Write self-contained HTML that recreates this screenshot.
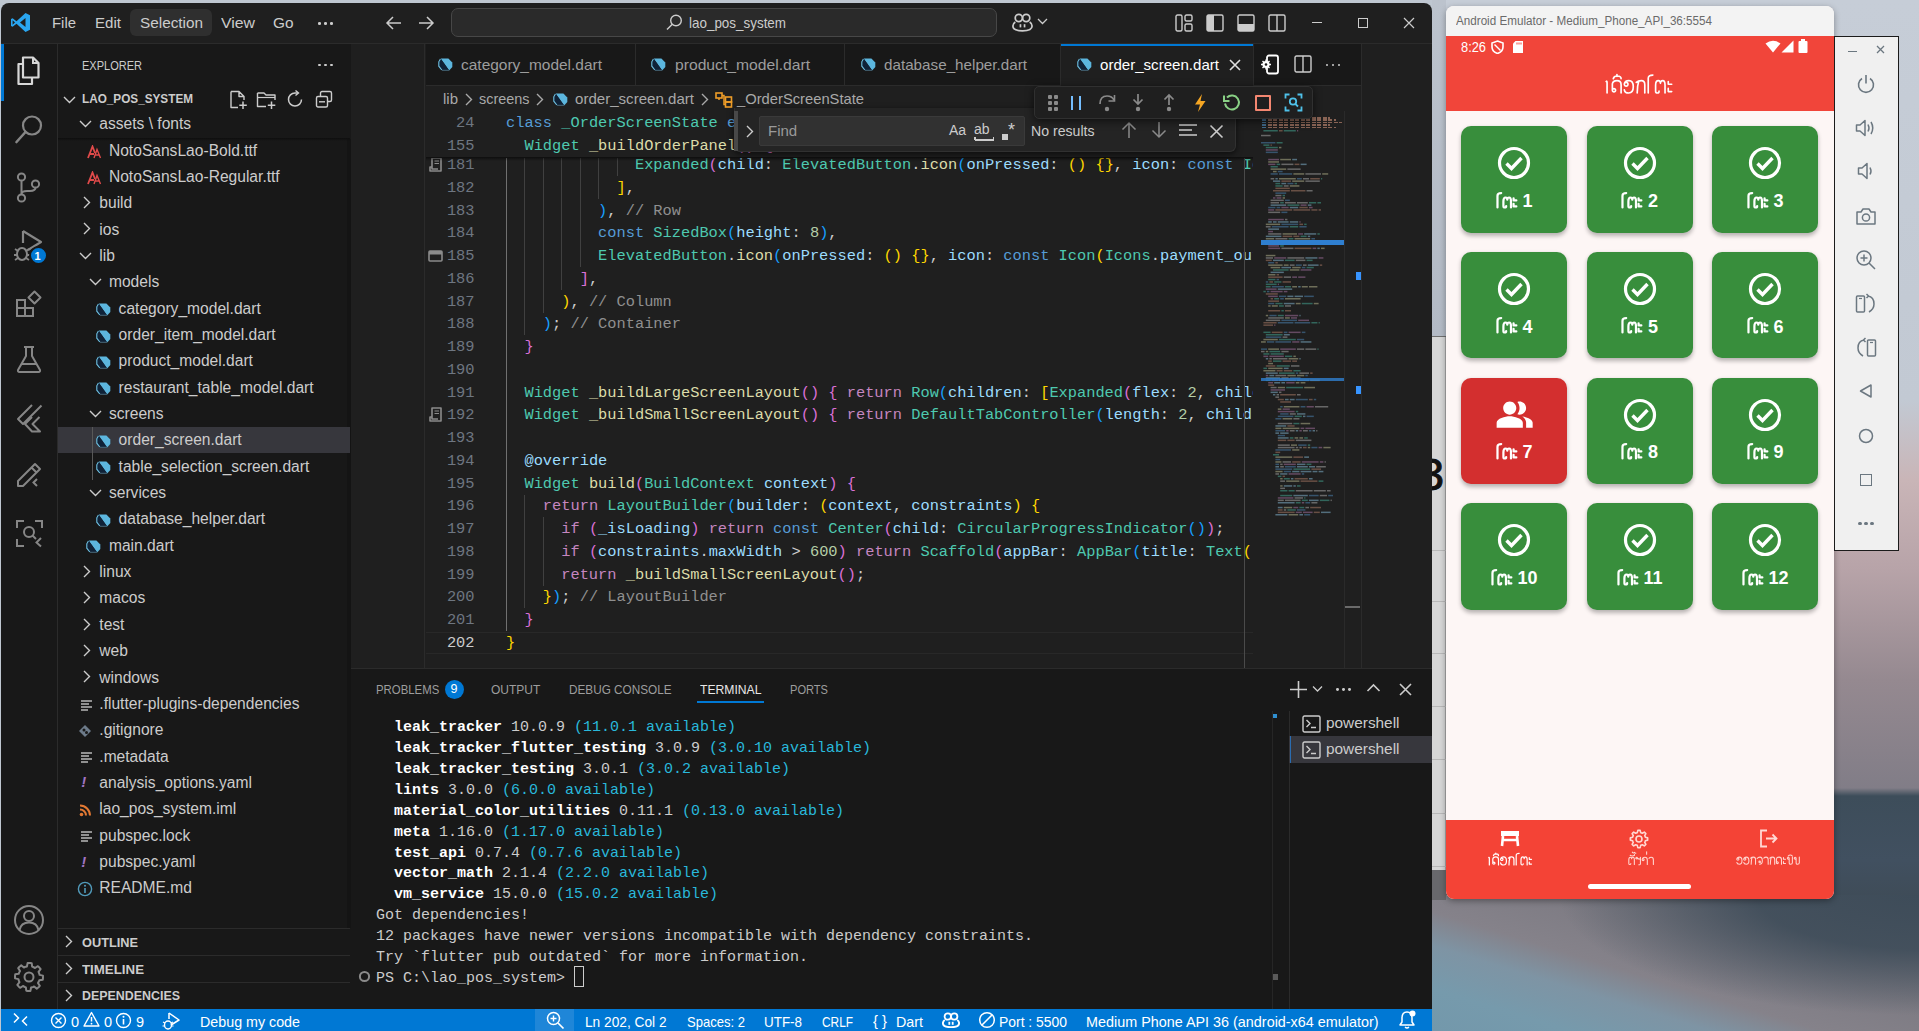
<!DOCTYPE html><html><head><meta charset="utf-8"><style>
html,body{margin:0;padding:0}
body{width:1919px;height:1031px;overflow:hidden;position:relative;background:#bfc7d1;font-family:"Liberation Sans",sans-serif}
.a{position:absolute;box-sizing:border-box}
.t{white-space:pre}
</style></head><body>
<div class="a" style="left:1432px;top:0px;width:487px;height:1031px;background:linear-gradient(180deg,#c6cdd7 0px,#c2c9d3 400px,#c9b5b7 480px,#b7a3a8 570px,#958990 680px,#817d87 788px,#3d4d5a 796px,#415060 860px,#3f4c58 897px,#767780 1031px)"></div>
<div class="a" style="left:1432px;top:895px;width:487px;height:136px;background:radial-gradient(ellipse 360px 120px at 100% 0%,rgba(62,76,89,1) 0%,rgba(62,76,89,.9) 45%,rgba(62,76,89,0) 100%),linear-gradient(197deg,#6f7079 0%,#7a7880 30%,#85828a 58%,#7e94a4 70%,#769aac 85%,#7398ab 100%)"></div>
<div class="a" style="left:1432px;top:0px;width:14px;height:337px;background:linear-gradient(180deg,#bcc3cd,#b3bac5)"></div>
<div class="a" style="left:1432px;top:336px;width:14px;height:1.5px;background:#6e6e6e"></div>
<div class="a" style="left:1432px;top:337px;width:14px;height:533px;background:#d6d6d6;border-right:1px solid #a8a8a8"></div>
<div class="a" style="left:1432px;top:870px;width:14px;height:30px;background:#68686c"></div>
<div class="a" style="left:1432px;top:550px;width:14px;height:1px;background:#b8b8b8"></div>
<div class="a" style="left:1432px;top:600.5px;width:14px;height:1px;background:#b8b8b8"></div>
<div class="a" style="left:1432px;top:653px;width:14px;height:1px;background:#b8b8b8"></div>
<div class="a" style="left:1432px;top:706px;width:14px;height:1px;background:#b8b8b8"></div>
<div class="a" style="left:1432px;top:759px;width:14px;height:1px;background:#b8b8b8"></div>
<div class="a" style="left:1432px;top:812.5px;width:14px;height:1px;background:#b8b8b8"></div>
<div class="a" style="left:1432px;top:866px;width:14px;height:1px;background:#b8b8b8"></div>
<div class="a t" style="left:1419px;top:450.27px;font-size:45px;line-height:50.27px;color:#111111;font-family:'Liberation Sans',sans-serif;font-weight:400;-webkit-text-stroke:1px #111;">3</div>
<div class="a" style="left:1px;top:3px;width:1431px;height:1028px;background:#1f1f1f;border-radius:8px 8px 0 0;overflow:hidden"></div>
<div class="a" style="left:1px;top:43px;width:1431px;height:1px;background:#2b2b2b"></div>
<svg class="a" style="left:10px;top:12px;" width="21" height="21" viewBox="0 0 21 21" fill="none"><path d="M15.5 1 L20 3.2 V17.8 L15.5 20 L6.5 11.8 L2.6 14.8 L1 14 V7 L2.6 6.2 L6.5 9.2 Z M15.5 6 L10 10.5 L15.5 15 Z M2.6 8.2 V12.8 L5 10.5 Z" fill="#2aa6f0" fill-rule="evenodd"/></svg>
<div class="a" style="left:130px;top:9px;width:82px;height:27px;background:#2f2f2f;border-radius:6px"></div>
<div class="a t" style="left:52px;top:15.22px;font-size:15px;line-height:16.75px;color:#cccccc;font-family:'Liberation Sans',sans-serif;font-weight:400;transform:scaleX(0.9930);transform-origin:0 0;">File</div>
<div class="a t" style="left:94.5px;top:15.22px;font-size:15px;line-height:16.75px;color:#cccccc;font-family:'Liberation Sans',sans-serif;font-weight:400;transform:scaleX(1.0059);transform-origin:0 0;">Edit</div>
<div class="a t" style="left:139.5px;top:15.22px;font-size:15px;line-height:16.75px;color:#cccccc;font-family:'Liberation Sans',sans-serif;font-weight:400;transform:scaleX(1.0210);transform-origin:0 0;">Selection</div>
<div class="a t" style="left:220.5px;top:15.22px;font-size:15px;line-height:16.75px;color:#cccccc;font-family:'Liberation Sans',sans-serif;font-weight:400;transform:scaleX(1.0546);transform-origin:0 0;">View</div>
<div class="a t" style="left:273px;top:15.22px;font-size:15px;line-height:16.75px;color:#cccccc;font-family:'Liberation Sans',sans-serif;font-weight:400;transform:scaleX(1.0246);transform-origin:0 0;">Go</div>
<div class="a" style="left:318.2px;top:22px;width:2.6px;height:2.6px;background:#cccccc;border-radius:50%"></div>
<div class="a" style="left:324.2px;top:22px;width:2.6px;height:2.6px;background:#cccccc;border-radius:50%"></div>
<div class="a" style="left:330.2px;top:22px;width:2.6px;height:2.6px;background:#cccccc;border-radius:50%"></div>
<svg class="a" style="left:384px;top:14px;" width="20" height="18" viewBox="0 0 20 18" fill="none"><path d="M17 9 H3 M9 3 L3 9 L9 15" stroke="#cccccc" stroke-width="1.5"/></svg>
<svg class="a" style="left:416px;top:14px;" width="20" height="18" viewBox="0 0 20 18" fill="none"><path d="M3 9 H17 M11 3 L17 9 L11 15" stroke="#cccccc" stroke-width="1.5"/></svg>
<div class="a" style="left:451px;top:8px;width:546px;height:29px;background:#2a2a2a;border:1px solid #474747;border-radius:7px"></div>
<svg class="a" style="left:665px;top:13px;" width="19" height="19" viewBox="0 0 19 19" fill="none"><circle cx="11" cy="7.5" r="5.3" stroke="#cccccc" stroke-width="1.4"/><path d="M7.3 11.2 L2 16.5" stroke="#cccccc" stroke-width="1.5"/></svg>
<div class="a t" style="left:688.5px;top:14.92px;font-size:15px;line-height:16.75px;color:#cccccc;font-family:'Liberation Sans',sans-serif;font-weight:400;transform:scaleX(0.8950);transform-origin:0 0;">lao_pos_system</div>
<svg class="a" style="left:1012px;top:13px;" width="21" height="19" viewBox="0 0 21 19" fill="none"><circle cx="6.8" cy="5" r="3.6" stroke="#cccccc" stroke-width="1.7"/><circle cx="14.2" cy="5" r="3.6" stroke="#cccccc" stroke-width="1.7"/><path d="M3.3 9 Q0.9 10.5 0.9 13 Q0.9 17.8 10.5 17.8 Q20.1 17.8 20.1 13 Q20.1 10.5 17.7 9" stroke="#cccccc" stroke-width="1.7"/><rect x="7.6" y="11.2" width="1.7" height="3.2" fill="#cccccc"/><rect x="11.7" y="11.2" width="1.7" height="3.2" fill="#cccccc"/></svg>
<svg class="a" style="left:1037px;top:17px;" width="11" height="8" viewBox="0 0 11 8" fill="none"><path d="M1 2 L5.5 6.5 L10 2" stroke="#cccccc" stroke-width="1.3"/></svg>
<svg class="a" style="left:1175px;top:14px;" width="18" height="18" viewBox="0 0 18 18" fill="none"><rect x="1" y="1" width="6" height="16" rx="1.5" stroke="#cccccc" stroke-width="1.4"/><rect x="10" y="1" width="7" height="6" rx="1.5" stroke="#cccccc" stroke-width="1.4"/><rect x="10" y="10" width="7" height="7" rx="1.5" stroke="#cccccc" stroke-width="1.4"/></svg>
<svg class="a" style="left:1206px;top:14px;" width="18" height="18" viewBox="0 0 18 18" fill="none"><rect x="1" y="1" width="16" height="16" rx="1.5" stroke="#cccccc" stroke-width="1.4"/><rect x="1" y="1" width="7" height="16" fill="#cccccc"/></svg>
<svg class="a" style="left:1237px;top:14px;" width="18" height="18" viewBox="0 0 18 18" fill="none"><rect x="1" y="1" width="16" height="16" rx="1.5" stroke="#cccccc" stroke-width="1.4"/><rect x="1" y="10" width="16" height="7" fill="#cccccc"/></svg>
<svg class="a" style="left:1268px;top:14px;" width="18" height="18" viewBox="0 0 18 18" fill="none"><rect x="1" y="1" width="16" height="16" rx="1.5" stroke="#cccccc" stroke-width="1.4"/><path d="M9 1 V17" stroke="#cccccc" stroke-width="1.4"/></svg>
<div class="a" style="left:1312px;top:22px;width:10px;height:1.2px;background:#cccccc"></div>
<div class="a" style="left:1358px;top:18px;width:10px;height:10px;border:1.2px solid #cccccc"></div>
<svg class="a" style="left:1403px;top:17px;" width="12" height="12" viewBox="0 0 12 12" fill="none"><path d="M1 1 L11 11 M11 1 L1 11" stroke="#cccccc" stroke-width="1.2"/></svg>
<div class="a" style="left:1px;top:44px;width:57px;height:965px;background:#181818"></div>
<div class="a" style="left:57px;top:44px;width:1px;height:965px;background:#2b2b2b"></div>
<div class="a" style="left:58px;top:44px;width:293px;height:965px;background:#181818"></div>
<div class="a" style="left:347px;top:139px;width:4px;height:789px;background:#141414"></div>
<div class="a" style="left:351px;top:44px;width:1px;height:965px;background:#2b2b2b"></div>
<div class="a" style="left:351px;top:44px;width:1081px;height:624px;background:#1f1f1f"></div>
<div class="a" style="left:424px;top:44px;width:1px;height:624px;background:#2b2b2b"></div>
<div class="a" style="left:1361px;top:44px;width:1px;height:624px;background:#2b2b2b"></div>
<div class="a" style="left:426px;top:44px;width:935px;height:42px;background:#181818"></div>
<div class="a" style="left:426px;top:85px;width:935px;height:1px;background:#2b2b2b"></div>
<div class="a" style="left:351px;top:668px;width:1081px;height:341px;background:#181818;border-top:1px solid #2b2b2b"></div>
<div class="a" style="left:1px;top:1009px;width:1431px;height:22px;background:#0078d4"></div>
<div class="a" style="left:1px;top:44px;width:2.5px;height:57px;background:#0078d4"></div>
<svg class="a" style="left:14px;top:56px;" width="29" height="30" viewBox="0 0 29 30" fill="none"><path d="M9 1.5 H19 L24.5 7 V21.5 H9 Z" stroke="#d7d7d7" stroke-width="2.2" stroke-linejoin="round"/><path d="M19 1.5 V7 H24.5" stroke="#d7d7d7" stroke-width="2"/><path d="M9 8 H4.5 V28 H18 V22" stroke="#d7d7d7" stroke-width="2.2" stroke-linejoin="round"/></svg>
<svg class="a" style="left:14px;top:114px;" width="30" height="31" viewBox="0 0 30 31" fill="none"><circle cx="18" cy="11.5" r="9" stroke="#868686" stroke-width="2.2"/><path d="M11.5 18 L2.5 28" stroke="#868686" stroke-width="2.6" stroke-linecap="round"/></svg>
<svg class="a" style="left:16px;top:172px;" width="25" height="31" viewBox="0 0 25 31" fill="none"><circle cx="5.5" cy="5" r="3.6" stroke="#868686" stroke-width="2"/><circle cx="5.5" cy="26" r="3.6" stroke="#868686" stroke-width="2"/><circle cx="19.5" cy="12" r="3.6" stroke="#868686" stroke-width="2"/><path d="M5.5 8.6 V22.4 M19.5 15.6 Q19.5 19 14 19 H11 Q5.5 19 5.5 22.4" stroke="#868686" stroke-width="2"/></svg>
<svg class="a" style="left:12px;top:228px;" width="32" height="34" viewBox="0 0 32 34" fill="none"><path d="M11 3 L29 14 L16 22" stroke="#868686" stroke-width="2.2" stroke-linejoin="round"/><path d="M11 3 V15" stroke="#868686" stroke-width="2.2"/><ellipse cx="10" cy="26" rx="5" ry="6" stroke="#868686" stroke-width="2"/><path d="M3 21 L6 23 M17 21 L14 23 M2 27 H5 M15 27 H18 M3 32 L6 30 M17 32 L14 30" stroke="#868686" stroke-width="1.8"/></svg>
<div class="a" style="left:28.5px;top:245.5px;width:19px;height:19px;background:#0078d4;border-radius:50%;border:2px solid #181818"></div>
<div class="a t" style="left:34.5px;top:250.04px;font-size:11px;line-height:12.29px;color:#ffffff;font-family:'Liberation Sans',sans-serif;font-weight:700;">1</div>
<svg class="a" style="left:15px;top:289px;" width="28" height="28" viewBox="0 0 28 28" fill="none"><rect x="2" y="11" width="8" height="8" stroke="#868686" stroke-width="2"/><rect x="2" y="19" width="8" height="8" stroke="#868686" stroke-width="2"/><rect x="10" y="19" width="8" height="8" stroke="#868686" stroke-width="2"/><path d="M19.5 2.5 L25.5 8.5 L19.5 14.5 L13.5 8.5 Z" stroke="#868686" stroke-width="2" stroke-linejoin="round"/></svg>
<svg class="a" style="left:15px;top:345px;" width="28" height="29" viewBox="0 0 28 29" fill="none"><path d="M9 2 H19 M11 2 V11 L3 25 Q2.5 27 4.5 27 H23.5 Q25.5 27 25 25 L17 11 V2" stroke="#868686" stroke-width="2" stroke-linejoin="round"/><path d="M7 19 H21" stroke="#868686" stroke-width="2"/></svg>
<svg class="a" style="left:15px;top:403px;" width="28" height="31" viewBox="0 0 28 31" fill="none"><path d="M17 2 L3 16 L8 21 L26.5 2.5" stroke="#868686" stroke-width="2" stroke-linejoin="round"/><path d="M17 14 L10 21 L17 28.5 L25 28.5 L17.5 21 L24.5 14" stroke="#868686" stroke-width="2" stroke-linejoin="round"/></svg>
<svg class="a" style="left:15px;top:462px;" width="28" height="26" viewBox="0 0 28 26" fill="none"><path d="M20 2 L25 7 L8 24 H3 V19 Z M16.5 5.5 L21.5 10.5" stroke="#868686" stroke-width="2" stroke-linejoin="round"/><path d="M22 17 L18.5 20.5 L22 24" stroke="#868686" stroke-width="2"/></svg>
<svg class="a" style="left:15px;top:519px;" width="29" height="29" viewBox="0 0 29 29" fill="none"><path d="M2 9 V2 H9 M20 2 H27 V9 M2 20 V27 H9" stroke="#868686" stroke-width="2"/><circle cx="14" cy="13" r="5" stroke="#868686" stroke-width="2"/><path d="M17.5 16.5 L21 20" stroke="#868686" stroke-width="2"/><path d="M26 19 L21.5 23.5 L26 27.5" stroke="#868686" stroke-width="2"/></svg>
<svg class="a" style="left:13px;top:904px;" width="32" height="32" viewBox="0 0 32 32" fill="none"><circle cx="16" cy="16" r="14" stroke="#868686" stroke-width="2"/><circle cx="16" cy="12" r="5" stroke="#868686" stroke-width="2"/><path d="M6.5 26 Q8 18.5 16 18.5 Q24 18.5 25.5 26" stroke="#868686" stroke-width="2"/></svg>
<svg class="a" style="left:13px;top:961px;" width="32" height="32" viewBox="0 0 32 32" fill="none"><polygon points="30.00,16.00 29.93,17.37 29.73,18.73 26.33,19.14 25.98,20.13 25.52,21.09 24.98,22.00 26.82,24.88 25.90,25.90 24.88,26.82 23.78,27.64 21.09,25.52 20.13,25.98 19.14,26.33 18.11,26.59 17.37,29.93 16.00,30.00 14.63,29.93 13.27,29.73 12.86,26.33 11.87,25.98 10.91,25.52 10.00,24.98 7.12,26.82 6.10,25.90 5.18,24.88 4.36,23.78 6.48,21.09 6.02,20.13 5.67,19.14 5.41,18.11 2.07,17.37 2.00,16.00 2.07,14.63 2.27,13.27 5.67,12.86 6.02,11.87 6.48,10.91 7.02,10.00 5.18,7.12 6.10,6.10 7.12,5.18 8.22,4.36 10.91,6.48 11.87,6.02 12.86,5.67 13.89,5.41 14.63,2.07 16.00,2.00 17.37,2.07 18.73,2.27 19.14,5.67 20.13,6.02 21.09,6.48 22.00,7.02 24.88,5.18 25.90,6.10 26.82,7.12 27.64,8.22 25.52,10.91 25.98,11.87 26.33,12.86 26.59,13.89 29.93,14.63" stroke="#868686" stroke-width="2" stroke-linejoin="round"/><circle cx="16" cy="16" r="4.5" stroke="#868686" stroke-width="2"/></svg>
<div class="a t" style="left:82px;top:58.38px;font-size:13.5px;line-height:15.08px;color:#cccccc;font-family:'Liberation Sans',sans-serif;font-weight:400;transform:scaleX(0.8160);transform-origin:0 0;">EXPLORER</div>
<div class="a" style="left:318.1px;top:63.5px;width:2.8px;height:2.8px;background:#cccccc;border-radius:50%"></div>
<div class="a" style="left:324.1px;top:63.5px;width:2.8px;height:2.8px;background:#cccccc;border-radius:50%"></div>
<div class="a" style="left:330.1px;top:63.5px;width:2.8px;height:2.8px;background:#cccccc;border-radius:50%"></div>
<svg class="a" style="left:63px;top:95px;" width="13" height="9" viewBox="0 0 13 9" fill="none"><path d="M1 2 L6.5 7.5 L12 2" stroke="#cccccc" stroke-width="1.4"/></svg>
<div class="a t" style="left:82px;top:92.03px;font-size:13px;line-height:14.52px;color:#cccccc;font-family:'Liberation Sans',sans-serif;font-weight:700;transform:scaleX(0.9039);transform-origin:0 0;">LAO_POS_SYSTEM</div>
<svg class="a" style="left:229px;top:90px;" width="20" height="20" viewBox="0 0 20 20" fill="none"><path d="M2 1.5 H10 L15 6.5 V10 M10 1.5 V6.5 H15 M2 1.5 V17.5 H9" stroke="#cccccc" stroke-width="1.4" stroke-linejoin="round"/><path d="M14 11.5 V19 M10.3 15.2 H17.8" stroke="#cccccc" stroke-width="1.5"/></svg>
<svg class="a" style="left:256px;top:90px;" width="22" height="20" viewBox="0 0 22 20" fill="none"><path d="M1.5 3 V16.5 H10 M1.5 3 H8 L10 5 H19 V10" stroke="#cccccc" stroke-width="1.4" stroke-linejoin="round"/><path d="M1.5 7.5 H19" stroke="#cccccc" stroke-width="1.2"/><path d="M15.5 11.5 V19 M11.8 15.2 H19.3" stroke="#cccccc" stroke-width="1.5"/></svg>
<svg class="a" style="left:286px;top:90px;" width="19" height="19" viewBox="0 0 19 19" fill="none"><path d="M15.5 9.5 A6.5 6.5 0 1 1 9 3 H12" stroke="#cccccc" stroke-width="1.5"/><path d="M9.5 0.5 L12.5 3 L9.5 5.5" stroke="#cccccc" stroke-width="1.4"/></svg>
<svg class="a" style="left:315px;top:90px;" width="18" height="19" viewBox="0 0 18 19" fill="none"><rect x="5.5" y="1.5" width="11" height="10" rx="1.5" stroke="#cccccc" stroke-width="1.4"/><rect x="1.5" y="6.5" width="11" height="10.5" rx="1.5" stroke="#cccccc" stroke-width="1.4" fill="#181818"/><path d="M4 11.8 H10" stroke="#cccccc" stroke-width="1.4"/></svg>
<div class="a" style="left:58px;top:427px;width:292px;height:26px;background:#37373d"></div>
<div class="a" style="left:92px;top:427px;width:1px;height:53px;background:#585858"></div>
<svg class="a" style="left:79.1px;top:119.0px;" width="13" height="9" viewBox="0 0 13 9" fill="none"><path d="M1 2 L6.5 7.5 L12 2" stroke="#cccccc" stroke-width="1.4"/></svg>
<div class="a t" style="left:99.3px;top:115.18px;font-size:15.6px;line-height:17.43px;color:#cccccc;font-family:'Liberation Sans',sans-serif;font-weight:400;">assets \ fonts</div>
<svg class="a" style="left:86.95px;top:144.65px;" width="15" height="14" viewBox="0 0 15 14" fill="none"><path d="M1 13 L5.5 1.5 L8 8 M3 9 H7" stroke="#e04a4a" stroke-width="1.8"/><path d="M7 13 L10 4.5 L13.5 13 M8.5 10 H12" stroke="#e04a4a" stroke-width="1.4"/></svg>
<div class="a t" style="left:108.95px;top:141.53px;font-size:15.6px;line-height:17.43px;color:#cccccc;font-family:'Liberation Sans',sans-serif;font-weight:400;">NotoSansLao-Bold.ttf</div>
<svg class="a" style="left:86.95px;top:171.0px;" width="15" height="14" viewBox="0 0 15 14" fill="none"><path d="M1 13 L5.5 1.5 L8 8 M3 9 H7" stroke="#e04a4a" stroke-width="1.8"/><path d="M7 13 L10 4.5 L13.5 13 M8.5 10 H12" stroke="#e04a4a" stroke-width="1.4"/></svg>
<div class="a t" style="left:108.95px;top:167.88px;font-size:15.6px;line-height:17.43px;color:#cccccc;font-family:'Liberation Sans',sans-serif;font-weight:400;">NotoSansLao-Regular.ttf</div>
<svg class="a" style="left:81.6px;top:196.05px;" width="9" height="13" viewBox="0 0 9 13" fill="none"><path d="M2 1 L7.5 6.5 L2 12" stroke="#cccccc" stroke-width="1.4"/></svg>
<div class="a t" style="left:99.3px;top:194.23px;font-size:15.6px;line-height:17.43px;color:#cccccc;font-family:'Liberation Sans',sans-serif;font-weight:400;">build</div>
<svg class="a" style="left:81.6px;top:222.39999999999998px;" width="9" height="13" viewBox="0 0 9 13" fill="none"><path d="M2 1 L7.5 6.5 L2 12" stroke="#cccccc" stroke-width="1.4"/></svg>
<div class="a t" style="left:99.3px;top:220.58px;font-size:15.6px;line-height:17.43px;color:#cccccc;font-family:'Liberation Sans',sans-serif;font-weight:400;">ios</div>
<svg class="a" style="left:79.1px;top:250.75px;" width="13" height="9" viewBox="0 0 13 9" fill="none"><path d="M1 2 L6.5 7.5 L12 2" stroke="#cccccc" stroke-width="1.4"/></svg>
<div class="a t" style="left:99.3px;top:246.93px;font-size:15.6px;line-height:17.43px;color:#cccccc;font-family:'Liberation Sans',sans-serif;font-weight:400;">lib</div>
<svg class="a" style="left:88.75px;top:277.1px;" width="13" height="9" viewBox="0 0 13 9" fill="none"><path d="M1 2 L6.5 7.5 L12 2" stroke="#cccccc" stroke-width="1.4"/></svg>
<div class="a t" style="left:108.95px;top:273.28px;font-size:15.6px;line-height:17.43px;color:#cccccc;font-family:'Liberation Sans',sans-serif;font-weight:400;">models</div>
<svg class="a" style="left:96.1px;top:303.25px;" width="15" height="13" viewBox="0 0 15 13" fill="none"><path d="M2.6 0.6 L10.4 0.6 L14.3 4.4 L14.3 9 L11.2 12.4 Z" fill="#5cb6de"/><path d="M2.6 0.6 L11.2 12.4 L4 12.4 L0.7 8.4 L0.7 3.6 Z" fill="#0f2238"/><path d="M2.4 1 L0.8 3.8 L0.8 8.2 L3.8 12" stroke="#6fc0e0" stroke-width="1.1" fill="none"/><path d="M4 12.3 L11 12.3" stroke="#4f6f80" stroke-width="0.9"/></svg>
<div class="a t" style="left:118.6px;top:299.63px;font-size:15.6px;line-height:17.43px;color:#cccccc;font-family:'Liberation Sans',sans-serif;font-weight:400;">category_model.dart</div>
<svg class="a" style="left:96.1px;top:329.6px;" width="15" height="13" viewBox="0 0 15 13" fill="none"><path d="M2.6 0.6 L10.4 0.6 L14.3 4.4 L14.3 9 L11.2 12.4 Z" fill="#5cb6de"/><path d="M2.6 0.6 L11.2 12.4 L4 12.4 L0.7 8.4 L0.7 3.6 Z" fill="#0f2238"/><path d="M2.4 1 L0.8 3.8 L0.8 8.2 L3.8 12" stroke="#6fc0e0" stroke-width="1.1" fill="none"/><path d="M4 12.3 L11 12.3" stroke="#4f6f80" stroke-width="0.9"/></svg>
<div class="a t" style="left:118.6px;top:325.98px;font-size:15.6px;line-height:17.43px;color:#cccccc;font-family:'Liberation Sans',sans-serif;font-weight:400;">order_item_model.dart</div>
<svg class="a" style="left:96.1px;top:355.95px;" width="15" height="13" viewBox="0 0 15 13" fill="none"><path d="M2.6 0.6 L10.4 0.6 L14.3 4.4 L14.3 9 L11.2 12.4 Z" fill="#5cb6de"/><path d="M2.6 0.6 L11.2 12.4 L4 12.4 L0.7 8.4 L0.7 3.6 Z" fill="#0f2238"/><path d="M2.4 1 L0.8 3.8 L0.8 8.2 L3.8 12" stroke="#6fc0e0" stroke-width="1.1" fill="none"/><path d="M4 12.3 L11 12.3" stroke="#4f6f80" stroke-width="0.9"/></svg>
<div class="a t" style="left:118.6px;top:352.33px;font-size:15.6px;line-height:17.43px;color:#cccccc;font-family:'Liberation Sans',sans-serif;font-weight:400;">product_model.dart</div>
<svg class="a" style="left:96.1px;top:382.3px;" width="15" height="13" viewBox="0 0 15 13" fill="none"><path d="M2.6 0.6 L10.4 0.6 L14.3 4.4 L14.3 9 L11.2 12.4 Z" fill="#5cb6de"/><path d="M2.6 0.6 L11.2 12.4 L4 12.4 L0.7 8.4 L0.7 3.6 Z" fill="#0f2238"/><path d="M2.4 1 L0.8 3.8 L0.8 8.2 L3.8 12" stroke="#6fc0e0" stroke-width="1.1" fill="none"/><path d="M4 12.3 L11 12.3" stroke="#4f6f80" stroke-width="0.9"/></svg>
<div class="a t" style="left:118.6px;top:378.68px;font-size:15.6px;line-height:17.43px;color:#cccccc;font-family:'Liberation Sans',sans-serif;font-weight:400;">restaurant_table_model.dart</div>
<svg class="a" style="left:88.75px;top:408.85px;" width="13" height="9" viewBox="0 0 13 9" fill="none"><path d="M1 2 L6.5 7.5 L12 2" stroke="#cccccc" stroke-width="1.4"/></svg>
<div class="a t" style="left:108.95px;top:405.03px;font-size:15.6px;line-height:17.43px;color:#cccccc;font-family:'Liberation Sans',sans-serif;font-weight:400;">screens</div>
<svg class="a" style="left:96.1px;top:435.00000000000006px;" width="15" height="13" viewBox="0 0 15 13" fill="none"><path d="M2.6 0.6 L10.4 0.6 L14.3 4.4 L14.3 9 L11.2 12.4 Z" fill="#5cb6de"/><path d="M2.6 0.6 L11.2 12.4 L4 12.4 L0.7 8.4 L0.7 3.6 Z" fill="#0f2238"/><path d="M2.4 1 L0.8 3.8 L0.8 8.2 L3.8 12" stroke="#6fc0e0" stroke-width="1.1" fill="none"/><path d="M4 12.3 L11 12.3" stroke="#4f6f80" stroke-width="0.9"/></svg>
<div class="a t" style="left:118.6px;top:431.38px;font-size:15.6px;line-height:17.43px;color:#cccccc;font-family:'Liberation Sans',sans-serif;font-weight:400;">order_screen.dart</div>
<svg class="a" style="left:96.1px;top:461.35px;" width="15" height="13" viewBox="0 0 15 13" fill="none"><path d="M2.6 0.6 L10.4 0.6 L14.3 4.4 L14.3 9 L11.2 12.4 Z" fill="#5cb6de"/><path d="M2.6 0.6 L11.2 12.4 L4 12.4 L0.7 8.4 L0.7 3.6 Z" fill="#0f2238"/><path d="M2.4 1 L0.8 3.8 L0.8 8.2 L3.8 12" stroke="#6fc0e0" stroke-width="1.1" fill="none"/><path d="M4 12.3 L11 12.3" stroke="#4f6f80" stroke-width="0.9"/></svg>
<div class="a t" style="left:118.6px;top:457.73px;font-size:15.6px;line-height:17.43px;color:#cccccc;font-family:'Liberation Sans',sans-serif;font-weight:400;">table_selection_screen.dart</div>
<svg class="a" style="left:88.75px;top:487.90000000000003px;" width="13" height="9" viewBox="0 0 13 9" fill="none"><path d="M1 2 L6.5 7.5 L12 2" stroke="#cccccc" stroke-width="1.4"/></svg>
<div class="a t" style="left:108.95px;top:484.08px;font-size:15.6px;line-height:17.43px;color:#cccccc;font-family:'Liberation Sans',sans-serif;font-weight:400;">services</div>
<svg class="a" style="left:96.1px;top:514.05px;" width="15" height="13" viewBox="0 0 15 13" fill="none"><path d="M2.6 0.6 L10.4 0.6 L14.3 4.4 L14.3 9 L11.2 12.4 Z" fill="#5cb6de"/><path d="M2.6 0.6 L11.2 12.4 L4 12.4 L0.7 8.4 L0.7 3.6 Z" fill="#0f2238"/><path d="M2.4 1 L0.8 3.8 L0.8 8.2 L3.8 12" stroke="#6fc0e0" stroke-width="1.1" fill="none"/><path d="M4 12.3 L11 12.3" stroke="#4f6f80" stroke-width="0.9"/></svg>
<div class="a t" style="left:118.6px;top:510.43px;font-size:15.6px;line-height:17.43px;color:#cccccc;font-family:'Liberation Sans',sans-serif;font-weight:400;">database_helper.dart</div>
<svg class="a" style="left:86.45px;top:540.4px;" width="15" height="13" viewBox="0 0 15 13" fill="none"><path d="M2.6 0.6 L10.4 0.6 L14.3 4.4 L14.3 9 L11.2 12.4 Z" fill="#5cb6de"/><path d="M2.6 0.6 L11.2 12.4 L4 12.4 L0.7 8.4 L0.7 3.6 Z" fill="#0f2238"/><path d="M2.4 1 L0.8 3.8 L0.8 8.2 L3.8 12" stroke="#6fc0e0" stroke-width="1.1" fill="none"/><path d="M4 12.3 L11 12.3" stroke="#4f6f80" stroke-width="0.9"/></svg>
<div class="a t" style="left:108.95px;top:536.78px;font-size:15.6px;line-height:17.43px;color:#cccccc;font-family:'Liberation Sans',sans-serif;font-weight:400;">main.dart</div>
<svg class="a" style="left:81.6px;top:564.95px;" width="9" height="13" viewBox="0 0 9 13" fill="none"><path d="M2 1 L7.5 6.5 L2 12" stroke="#cccccc" stroke-width="1.4"/></svg>
<div class="a t" style="left:99.3px;top:563.13px;font-size:15.6px;line-height:17.43px;color:#cccccc;font-family:'Liberation Sans',sans-serif;font-weight:400;">linux</div>
<svg class="a" style="left:81.6px;top:591.3000000000001px;" width="9" height="13" viewBox="0 0 9 13" fill="none"><path d="M2 1 L7.5 6.5 L2 12" stroke="#cccccc" stroke-width="1.4"/></svg>
<div class="a t" style="left:99.3px;top:589.48px;font-size:15.6px;line-height:17.43px;color:#cccccc;font-family:'Liberation Sans',sans-serif;font-weight:400;">macos</div>
<svg class="a" style="left:81.6px;top:617.6500000000001px;" width="9" height="13" viewBox="0 0 9 13" fill="none"><path d="M2 1 L7.5 6.5 L2 12" stroke="#cccccc" stroke-width="1.4"/></svg>
<div class="a t" style="left:99.3px;top:615.83px;font-size:15.6px;line-height:17.43px;color:#cccccc;font-family:'Liberation Sans',sans-serif;font-weight:400;">test</div>
<svg class="a" style="left:81.6px;top:644.0px;" width="9" height="13" viewBox="0 0 9 13" fill="none"><path d="M2 1 L7.5 6.5 L2 12" stroke="#cccccc" stroke-width="1.4"/></svg>
<div class="a t" style="left:99.3px;top:642.18px;font-size:15.6px;line-height:17.43px;color:#cccccc;font-family:'Liberation Sans',sans-serif;font-weight:400;">web</div>
<svg class="a" style="left:81.6px;top:670.35px;" width="9" height="13" viewBox="0 0 9 13" fill="none"><path d="M2 1 L7.5 6.5 L2 12" stroke="#cccccc" stroke-width="1.4"/></svg>
<div class="a t" style="left:99.3px;top:668.53px;font-size:15.6px;line-height:17.43px;color:#cccccc;font-family:'Liberation Sans',sans-serif;font-weight:400;">windows</div>
<svg class="a" style="left:80.3px;top:698.5px;" width="13" height="13" viewBox="0 0 13 13" fill="none"><path d="M1 2 H12 M1 5 H9 M1 8 H12 M1 11 H8" stroke="#b8b8b8" stroke-width="1.6"/></svg>
<div class="a t" style="left:99.3px;top:694.88px;font-size:15.6px;line-height:17.43px;color:#cccccc;font-family:'Liberation Sans',sans-serif;font-weight:400;">.flutter-plugins-dependencies</div>
<svg class="a" style="left:78.3px;top:724.35px;" width="14" height="14" viewBox="0 0 14 14" fill="none"><path d="M7 1 L13 7 L7 13 L1 7 Z" fill="#6d7b8a"/><circle cx="6" cy="6" r="1.5" fill="#181818"/><circle cx="8.5" cy="8.5" r="1.5" fill="#181818"/></svg>
<div class="a t" style="left:99.3px;top:721.23px;font-size:15.6px;line-height:17.43px;color:#cccccc;font-family:'Liberation Sans',sans-serif;font-weight:400;">.gitignore</div>
<svg class="a" style="left:80.3px;top:751.2px;" width="13" height="13" viewBox="0 0 13 13" fill="none"><path d="M1 2 H12 M1 5 H9 M1 8 H12 M1 11 H8" stroke="#b8b8b8" stroke-width="1.6"/></svg>
<div class="a t" style="left:99.3px;top:747.58px;font-size:15.6px;line-height:17.43px;color:#cccccc;font-family:'Liberation Sans',sans-serif;font-weight:400;">.metadata</div>
<div class="a t" style="left:81.3px;top:774.47px;font-size:15px;line-height:16.75px;color:#a074c4;font-family:'Liberation Sans',sans-serif;font-weight:700;font-style:italic;">!</div>
<div class="a t" style="left:99.3px;top:773.93px;font-size:15.6px;line-height:17.43px;color:#cccccc;font-family:'Liberation Sans',sans-serif;font-weight:400;">analysis_options.yaml</div>
<svg class="a" style="left:79.3px;top:804.4px;" width="13" height="13" viewBox="0 0 13 13" fill="none"><circle cx="2.5" cy="10.5" r="1.8" fill="#e37933"/><path d="M1 5.5 A6 6 0 0 1 7 11.5 M1 1.5 A10 10 0 0 1 11 11.5" stroke="#e37933" stroke-width="2"/></svg>
<div class="a t" style="left:99.3px;top:800.28px;font-size:15.6px;line-height:17.43px;color:#cccccc;font-family:'Liberation Sans',sans-serif;font-weight:400;">lao_pos_system.iml</div>
<svg class="a" style="left:80.3px;top:830.25px;" width="13" height="13" viewBox="0 0 13 13" fill="none"><path d="M1 2 H12 M1 5 H9 M1 8 H12 M1 11 H8" stroke="#b8b8b8" stroke-width="1.6"/></svg>
<div class="a t" style="left:99.3px;top:826.63px;font-size:15.6px;line-height:17.43px;color:#cccccc;font-family:'Liberation Sans',sans-serif;font-weight:400;">pubspec.lock</div>
<div class="a t" style="left:81.3px;top:853.52px;font-size:15px;line-height:16.75px;color:#a074c4;font-family:'Liberation Sans',sans-serif;font-weight:700;font-style:italic;">!</div>
<div class="a t" style="left:99.3px;top:852.98px;font-size:15.6px;line-height:17.43px;color:#cccccc;font-family:'Liberation Sans',sans-serif;font-weight:400;">pubspec.yaml</div>
<svg class="a" style="left:77.3px;top:881.45px;" width="16" height="16" viewBox="0 0 16 16" fill="none"><circle cx="8" cy="8" r="6.6" stroke="#519aba" stroke-width="1.4"/><path d="M8 7 V12" stroke="#519aba" stroke-width="1.6"/><circle cx="8" cy="4.8" r="1" fill="#519aba"/></svg>
<div class="a t" style="left:99.3px;top:879.33px;font-size:15.6px;line-height:17.43px;color:#cccccc;font-family:'Liberation Sans',sans-serif;font-weight:400;">README.md</div>
<div class="a" style="left:58px;top:138px;width:292px;height:3px;background:linear-gradient(#0e0e0e,rgba(24,24,24,0))"></div>
<div class="a" style="left:58px;top:928px;width:292px;height:1px;background:#2b2b2b"></div>
<svg class="a" style="left:64px;top:935.0px;" width="9" height="13" viewBox="0 0 9 13" fill="none"><path d="M2 1 L7.5 6.5 L2 12" stroke="#cccccc" stroke-width="1.4"/></svg>
<div class="a t" style="left:82px;top:935.74px;font-size:13px;line-height:14.52px;color:#cccccc;font-family:'Liberation Sans',sans-serif;font-weight:700;transform:scaleX(0.9816);transform-origin:0 0;">OUTLINE</div>
<div class="a" style="left:58px;top:955px;width:292px;height:1px;background:#2b2b2b"></div>
<svg class="a" style="left:64px;top:962.0px;" width="9" height="13" viewBox="0 0 9 13" fill="none"><path d="M2 1 L7.5 6.5 L2 12" stroke="#cccccc" stroke-width="1.4"/></svg>
<div class="a t" style="left:82px;top:962.74px;font-size:13px;line-height:14.52px;color:#cccccc;font-family:'Liberation Sans',sans-serif;font-weight:700;transform:scaleX(1.0220);transform-origin:0 0;">TIMELINE</div>
<div class="a" style="left:58px;top:981.5px;width:292px;height:1px;background:#2b2b2b"></div>
<svg class="a" style="left:64px;top:988.5px;" width="9" height="13" viewBox="0 0 9 13" fill="none"><path d="M2 1 L7.5 6.5 L2 12" stroke="#cccccc" stroke-width="1.4"/></svg>
<div class="a t" style="left:82px;top:989.24px;font-size:13px;line-height:14.52px;color:#cccccc;font-family:'Liberation Sans',sans-serif;font-weight:700;transform:scaleX(0.9553);transform-origin:0 0;">DEPENDENCIES</div>
<div class="a" style="left:635px;top:44px;width:1px;height:41px;background:#2b2b2b"></div>
<svg class="a" style="left:438px;top:58px;" width="15" height="13" viewBox="0 0 15 13" fill="none"><path d="M2.6 0.6 L10.4 0.6 L14.3 4.4 L14.3 9 L11.2 12.4 Z" fill="#5cb6de"/><path d="M2.6 0.6 L11.2 12.4 L4 12.4 L0.7 8.4 L0.7 3.6 Z" fill="#0f2238"/><path d="M2.4 1 L0.8 3.8 L0.8 8.2 L3.8 12" stroke="#6fc0e0" stroke-width="1.1" fill="none"/><path d="M4 12.3 L11 12.3" stroke="#4f6f80" stroke-width="0.9"/></svg>
<div class="a t" style="left:461px;top:57.42px;font-size:15px;line-height:16.75px;color:#9d9d9d;font-family:'Liberation Sans',sans-serif;font-weight:400;transform:scaleX(1.0312);transform-origin:0 0;">category_model.dart</div>
<div class="a" style="left:844px;top:44px;width:1px;height:41px;background:#2b2b2b"></div>
<svg class="a" style="left:651px;top:58px;" width="15" height="13" viewBox="0 0 15 13" fill="none"><path d="M2.6 0.6 L10.4 0.6 L14.3 4.4 L14.3 9 L11.2 12.4 Z" fill="#5cb6de"/><path d="M2.6 0.6 L11.2 12.4 L4 12.4 L0.7 8.4 L0.7 3.6 Z" fill="#0f2238"/><path d="M2.4 1 L0.8 3.8 L0.8 8.2 L3.8 12" stroke="#6fc0e0" stroke-width="1.1" fill="none"/><path d="M4 12.3 L11 12.3" stroke="#4f6f80" stroke-width="0.9"/></svg>
<div class="a t" style="left:675px;top:57.42px;font-size:15px;line-height:16.75px;color:#9d9d9d;font-family:'Liberation Sans',sans-serif;font-weight:400;transform:scaleX(1.0446);transform-origin:0 0;">product_model.dart</div>
<div class="a" style="left:1060px;top:44px;width:1px;height:41px;background:#2b2b2b"></div>
<svg class="a" style="left:861px;top:58px;" width="15" height="13" viewBox="0 0 15 13" fill="none"><path d="M2.6 0.6 L10.4 0.6 L14.3 4.4 L14.3 9 L11.2 12.4 Z" fill="#5cb6de"/><path d="M2.6 0.6 L11.2 12.4 L4 12.4 L0.7 8.4 L0.7 3.6 Z" fill="#0f2238"/><path d="M2.4 1 L0.8 3.8 L0.8 8.2 L3.8 12" stroke="#6fc0e0" stroke-width="1.1" fill="none"/><path d="M4 12.3 L11 12.3" stroke="#4f6f80" stroke-width="0.9"/></svg>
<div class="a t" style="left:884px;top:57.42px;font-size:15px;line-height:16.75px;color:#9d9d9d;font-family:'Liberation Sans',sans-serif;font-weight:400;transform:scaleX(1.0147);transform-origin:0 0;">database_helper.dart</div>
<div class="a" style="left:1061px;top:44px;width:192px;height:42px;background:#1f1f1f"></div>
<div class="a" style="left:1061px;top:43.5px;width:192px;height:2px;background:#0078d4"></div>
<div class="a" style="left:1253px;top:44px;width:1px;height:41px;background:#2b2b2b"></div>
<svg class="a" style="left:1077px;top:58px;" width="15" height="13" viewBox="0 0 15 13" fill="none"><path d="M2.6 0.6 L10.4 0.6 L14.3 4.4 L14.3 9 L11.2 12.4 Z" fill="#5cb6de"/><path d="M2.6 0.6 L11.2 12.4 L4 12.4 L0.7 8.4 L0.7 3.6 Z" fill="#0f2238"/><path d="M2.4 1 L0.8 3.8 L0.8 8.2 L3.8 12" stroke="#6fc0e0" stroke-width="1.1" fill="none"/><path d="M4 12.3 L11 12.3" stroke="#4f6f80" stroke-width="0.9"/></svg>
<div class="a t" style="left:1100px;top:57.42px;font-size:15px;line-height:16.75px;color:#ffffff;font-family:'Liberation Sans',sans-serif;font-weight:400;transform:scaleX(1.0052);transform-origin:0 0;">order_screen.dart</div>
<svg class="a" style="left:1228px;top:58px;" width="14" height="14" viewBox="0 0 14 14" fill="none"><path d="M2 2 L12 12 M12 2 L2 12" stroke="#e0e0e0" stroke-width="1.6"/></svg>
<svg class="a" style="left:1260px;top:54px;" width="20" height="21" viewBox="0 0 20 21" fill="none"><rect x="7" y="1.5" width="11" height="18" rx="2" stroke="#ffffff" stroke-width="1.8"/><circle cx="6" cy="10.5" r="3.6" fill="#ffffff"/><circle cx="6" cy="10.5" r="1.4" fill="#181818"/><path d="M6 5.5 V15.5 M1 10.5 H11 M2.5 7 L9.5 14 M9.5 7 L2.5 14" stroke="#ffffff" stroke-width="1.4"/><circle cx="6" cy="10.5" r="1.3" fill="#181818"/></svg>
<svg class="a" style="left:1294px;top:55px;" width="18" height="18" viewBox="0 0 18 18" fill="none"><rect x="1" y="1" width="16" height="16" rx="1.5" stroke="#cccccc" stroke-width="1.4"/><path d="M9 1 V17" stroke="#cccccc" stroke-width="1.4"/></svg>
<div class="a" style="left:1325.6px;top:63.5px;width:2.8px;height:2.8px;background:#cccccc;border-radius:50%"></div>
<div class="a" style="left:1331.6px;top:63.5px;width:2.8px;height:2.8px;background:#cccccc;border-radius:50%"></div>
<div class="a" style="left:1337.6px;top:63.5px;width:2.8px;height:2.8px;background:#cccccc;border-radius:50%"></div>
<div class="a t" style="left:443px;top:90.92px;font-size:15px;line-height:16.75px;color:#a9a9a9;font-family:'Liberation Sans',sans-serif;font-weight:400;">lib</div>
<svg class="a" style="left:464px;top:92.5px;" width="9" height="13" viewBox="0 0 9 13" fill="none"><path d="M2 1 L7.5 6.5 L2 12" stroke="#a9a9a9" stroke-width="1.4"/></svg>
<div class="a t" style="left:478.5px;top:90.92px;font-size:15px;line-height:16.75px;color:#a9a9a9;font-family:'Liberation Sans',sans-serif;font-weight:400;transform:scaleX(0.9616);transform-origin:0 0;">screens</div>
<svg class="a" style="left:534.5px;top:92.5px;" width="9" height="13" viewBox="0 0 9 13" fill="none"><path d="M2 1 L7.5 6.5 L2 12" stroke="#a9a9a9" stroke-width="1.4"/></svg>
<svg class="a" style="left:553px;top:93px;" width="15" height="13" viewBox="0 0 15 13" fill="none"><path d="M2.6 0.6 L10.4 0.6 L14.3 4.4 L14.3 9 L11.2 12.4 Z" fill="#5cb6de"/><path d="M2.6 0.6 L11.2 12.4 L4 12.4 L0.7 8.4 L0.7 3.6 Z" fill="#0f2238"/><path d="M2.4 1 L0.8 3.8 L0.8 8.2 L3.8 12" stroke="#6fc0e0" stroke-width="1.1" fill="none"/><path d="M4 12.3 L11 12.3" stroke="#4f6f80" stroke-width="0.9"/></svg>
<div class="a t" style="left:575px;top:90.92px;font-size:15px;line-height:16.75px;color:#a9a9a9;font-family:'Liberation Sans',sans-serif;font-weight:400;transform:scaleX(1.0052);transform-origin:0 0;">order_screen.dart</div>
<svg class="a" style="left:699.5px;top:92.5px;" width="9" height="13" viewBox="0 0 9 13" fill="none"><path d="M2 1 L7.5 6.5 L2 12" stroke="#a9a9a9" stroke-width="1.4"/></svg>
<svg class="a" style="left:715px;top:91px;" width="18" height="17" viewBox="0 0 18 17" fill="none"><rect x="1" y="2" width="6" height="5" stroke="#ee9d28" stroke-width="1.6"/><rect x="10.5" y="6" width="6" height="5" stroke="#ee9d28" stroke-width="1.6"/><rect x="10.5" y="11" width="6" height="5" stroke="#ee9d28" stroke-width="1.6"/><path d="M7 4.5 H9 V13.5 H10.5 M4 7 V9" stroke="#ee9d28" stroke-width="1.5"/></svg>
<div class="a t" style="left:736.5px;top:90.92px;font-size:15px;line-height:16.75px;color:#a9a9a9;font-family:'Liberation Sans',sans-serif;font-weight:400;transform:scaleX(0.9828);transform-origin:0 0;">_OrderScreenState</div>
<div class="a" style="left:426px;top:631.5px;width:832px;height:22.5px;border-top:1.5px solid #282828;border-bottom:1.5px solid #282828"></div>
<div class="a" style="left:524.42px;top:153.25px;width:1px;height:182.0px;background:#404040"></div>
<div class="a" style="left:542.84px;top:153.25px;width:1px;height:159.25px;background:#404040"></div>
<div class="a" style="left:561.26px;top:153.25px;width:1px;height:136.5px;background:#404040"></div>
<div class="a" style="left:579.6800000000001px;top:153.25px;width:1px;height:113.75px;background:#404040"></div>
<div class="a" style="left:598.1px;top:153.25px;width:1px;height:45.5px;background:#404040"></div>
<div class="a" style="left:616.52px;top:153.25px;width:1px;height:22.75px;background:#404040"></div>
<div class="a" style="left:506.0px;top:153.25px;width:1px;height:477.75px;background:#707070"></div>
<div class="a" style="left:524.42px;top:494.5px;width:1px;height:113.75px;background:#404040"></div>
<div class="a" style="left:542.84px;top:517.25px;width:1px;height:68.25px;background:#404040"></div>
<div class="a t" style="left:424px;width:50.5px;text-align:right;top:157.16px;font-size:15.35px;line-height:17.39px;font-family:'Liberation Mono',monospace;color:#6e7681">181</div>
<div class="a t" style="left:506.0px;top:157.16px;font-size:15.35px;line-height:17.39px;font-family:'Liberation Mono',monospace;color:#cccccc"><span style="color:#cccccc">              </span><span style="color:#4ec9b0">Expanded</span><span style="color:#da70d6">(</span><span style="color:#9cdcfe">child</span><span style="color:#cccccc">: </span><span style="color:#4ec9b0">ElevatedButton</span><span style="color:#cccccc">.</span><span style="color:#dcdcaa">icon</span><span style="color:#179fff">(</span><span style="color:#9cdcfe">onPressed</span><span style="color:#cccccc">: </span><span style="color:#ffd700">()</span><span style="color:#cccccc"> </span><span style="color:#ffd700">{}</span><span style="color:#cccccc">, </span><span style="color:#9cdcfe">icon</span><span style="color:#cccccc">: </span><span style="color:#569cd6">const</span><span style="color:#cccccc"> </span><span style="color:#4ec9b0">Icon</span></div>
<div class="a t" style="left:424px;width:50.5px;text-align:right;top:179.91px;font-size:15.35px;line-height:17.39px;font-family:'Liberation Mono',monospace;color:#6e7681">182</div>
<div class="a t" style="left:506.0px;top:179.91px;font-size:15.35px;line-height:17.39px;font-family:'Liberation Mono',monospace;color:#cccccc"><span style="color:#cccccc">            </span><span style="color:#ffd700">]</span><span style="color:#cccccc">,</span></div>
<div class="a t" style="left:424px;width:50.5px;text-align:right;top:202.66px;font-size:15.35px;line-height:17.39px;font-family:'Liberation Mono',monospace;color:#6e7681">183</div>
<div class="a t" style="left:506.0px;top:202.66px;font-size:15.35px;line-height:17.39px;font-family:'Liberation Mono',monospace;color:#cccccc"><span style="color:#cccccc">          </span><span style="color:#179fff">)</span><span style="color:#cccccc">, </span><span style="color:#8f8f8f">// Row</span></div>
<div class="a t" style="left:424px;width:50.5px;text-align:right;top:225.41px;font-size:15.35px;line-height:17.39px;font-family:'Liberation Mono',monospace;color:#6e7681">184</div>
<div class="a t" style="left:506.0px;top:225.41px;font-size:15.35px;line-height:17.39px;font-family:'Liberation Mono',monospace;color:#cccccc"><span style="color:#cccccc">          </span><span style="color:#569cd6">const</span><span style="color:#cccccc"> </span><span style="color:#4ec9b0">SizedBox</span><span style="color:#179fff">(</span><span style="color:#9cdcfe">height</span><span style="color:#cccccc">: </span><span style="color:#b5cea8">8</span><span style="color:#179fff">)</span><span style="color:#cccccc">,</span></div>
<div class="a t" style="left:424px;width:50.5px;text-align:right;top:248.16px;font-size:15.35px;line-height:17.39px;font-family:'Liberation Mono',monospace;color:#6e7681">185</div>
<div class="a t" style="left:506.0px;top:248.16px;font-size:15.35px;line-height:17.39px;font-family:'Liberation Mono',monospace;color:#cccccc"><span style="color:#cccccc">          </span><span style="color:#4ec9b0">ElevatedButton</span><span style="color:#cccccc">.</span><span style="color:#dcdcaa">icon</span><span style="color:#179fff">(</span><span style="color:#9cdcfe">onPressed</span><span style="color:#cccccc">: </span><span style="color:#ffd700">()</span><span style="color:#cccccc"> </span><span style="color:#ffd700">{}</span><span style="color:#cccccc">, </span><span style="color:#9cdcfe">icon</span><span style="color:#cccccc">: </span><span style="color:#569cd6">const</span><span style="color:#cccccc"> </span><span style="color:#4ec9b0">Icon</span><span style="color:#ffd700">(</span><span style="color:#4ec9b0">Icons</span><span style="color:#cccccc">.</span><span style="color:#9cdcfe">payment_outlined</span></div>
<div class="a t" style="left:424px;width:50.5px;text-align:right;top:270.91px;font-size:15.35px;line-height:17.39px;font-family:'Liberation Mono',monospace;color:#6e7681">186</div>
<div class="a t" style="left:506.0px;top:270.91px;font-size:15.35px;line-height:17.39px;font-family:'Liberation Mono',monospace;color:#cccccc"><span style="color:#cccccc">        </span><span style="color:#da70d6">]</span><span style="color:#cccccc">,</span></div>
<div class="a t" style="left:424px;width:50.5px;text-align:right;top:293.66px;font-size:15.35px;line-height:17.39px;font-family:'Liberation Mono',monospace;color:#6e7681">187</div>
<div class="a t" style="left:506.0px;top:293.66px;font-size:15.35px;line-height:17.39px;font-family:'Liberation Mono',monospace;color:#cccccc"><span style="color:#cccccc">      </span><span style="color:#ffd700">)</span><span style="color:#cccccc">, </span><span style="color:#8f8f8f">// Column</span></div>
<div class="a t" style="left:424px;width:50.5px;text-align:right;top:316.41px;font-size:15.35px;line-height:17.39px;font-family:'Liberation Mono',monospace;color:#6e7681">188</div>
<div class="a t" style="left:506.0px;top:316.41px;font-size:15.35px;line-height:17.39px;font-family:'Liberation Mono',monospace;color:#cccccc"><span style="color:#cccccc">    </span><span style="color:#179fff">)</span><span style="color:#cccccc">; </span><span style="color:#8f8f8f">// Container</span></div>
<div class="a t" style="left:424px;width:50.5px;text-align:right;top:339.16px;font-size:15.35px;line-height:17.39px;font-family:'Liberation Mono',monospace;color:#6e7681">189</div>
<div class="a t" style="left:506.0px;top:339.16px;font-size:15.35px;line-height:17.39px;font-family:'Liberation Mono',monospace;color:#cccccc"><span style="color:#cccccc">  </span><span style="color:#da70d6">}</span></div>
<div class="a t" style="left:424px;width:50.5px;text-align:right;top:361.91px;font-size:15.35px;line-height:17.39px;font-family:'Liberation Mono',monospace;color:#6e7681">190</div>
<div class="a t" style="left:424px;width:50.5px;text-align:right;top:384.66px;font-size:15.35px;line-height:17.39px;font-family:'Liberation Mono',monospace;color:#6e7681">191</div>
<div class="a t" style="left:506.0px;top:384.66px;font-size:15.35px;line-height:17.39px;font-family:'Liberation Mono',monospace;color:#cccccc"><span style="color:#cccccc">  </span><span style="color:#4ec9b0">Widget</span><span style="color:#cccccc"> </span><span style="color:#dcdcaa">_buildLargeScreenLayout</span><span style="color:#da70d6">()</span><span style="color:#cccccc"> </span><span style="color:#da70d6">{</span><span style="color:#cccccc"> </span><span style="color:#c586c0">return</span><span style="color:#cccccc"> </span><span style="color:#4ec9b0">Row</span><span style="color:#179fff">(</span><span style="color:#9cdcfe">children</span><span style="color:#cccccc">: </span><span style="color:#ffd700">[</span><span style="color:#4ec9b0">Expanded</span><span style="color:#da70d6">(</span><span style="color:#9cdcfe">flex</span><span style="color:#cccccc">: </span><span style="color:#b5cea8">2</span><span style="color:#cccccc">, </span><span style="color:#9cdcfe">child: </span></div>
<div class="a t" style="left:424px;width:50.5px;text-align:right;top:407.41px;font-size:15.35px;line-height:17.39px;font-family:'Liberation Mono',monospace;color:#6e7681">192</div>
<div class="a t" style="left:506.0px;top:407.41px;font-size:15.35px;line-height:17.39px;font-family:'Liberation Mono',monospace;color:#cccccc"><span style="color:#cccccc">  </span><span style="color:#4ec9b0">Widget</span><span style="color:#cccccc"> </span><span style="color:#dcdcaa">_buildSmallScreenLayout</span><span style="color:#da70d6">()</span><span style="color:#cccccc"> </span><span style="color:#da70d6">{</span><span style="color:#cccccc"> </span><span style="color:#c586c0">return</span><span style="color:#cccccc"> </span><span style="color:#4ec9b0">DefaultTabController</span><span style="color:#179fff">(</span><span style="color:#9cdcfe">length</span><span style="color:#cccccc">: </span><span style="color:#b5cea8">2</span><span style="color:#cccccc">, </span><span style="color:#9cdcfe">child: </span></div>
<div class="a t" style="left:424px;width:50.5px;text-align:right;top:430.16px;font-size:15.35px;line-height:17.39px;font-family:'Liberation Mono',monospace;color:#6e7681">193</div>
<div class="a t" style="left:424px;width:50.5px;text-align:right;top:452.91px;font-size:15.35px;line-height:17.39px;font-family:'Liberation Mono',monospace;color:#6e7681">194</div>
<div class="a t" style="left:506.0px;top:452.91px;font-size:15.35px;line-height:17.39px;font-family:'Liberation Mono',monospace;color:#cccccc"><span style="color:#cccccc">  </span><span style="color:#9cdcfe">@override</span></div>
<div class="a t" style="left:424px;width:50.5px;text-align:right;top:475.66px;font-size:15.35px;line-height:17.39px;font-family:'Liberation Mono',monospace;color:#6e7681">195</div>
<div class="a t" style="left:506.0px;top:475.66px;font-size:15.35px;line-height:17.39px;font-family:'Liberation Mono',monospace;color:#cccccc"><span style="color:#cccccc">  </span><span style="color:#4ec9b0">Widget</span><span style="color:#cccccc"> </span><span style="color:#dcdcaa">build</span><span style="color:#da70d6">(</span><span style="color:#4ec9b0">BuildContext</span><span style="color:#cccccc"> </span><span style="color:#9cdcfe">context</span><span style="color:#da70d6">)</span><span style="color:#cccccc"> </span><span style="color:#da70d6">{</span></div>
<div class="a t" style="left:424px;width:50.5px;text-align:right;top:498.41px;font-size:15.35px;line-height:17.39px;font-family:'Liberation Mono',monospace;color:#6e7681">196</div>
<div class="a t" style="left:506.0px;top:498.41px;font-size:15.35px;line-height:17.39px;font-family:'Liberation Mono',monospace;color:#cccccc"><span style="color:#cccccc">    </span><span style="color:#c586c0">return</span><span style="color:#cccccc"> </span><span style="color:#4ec9b0">LayoutBuilder</span><span style="color:#179fff">(</span><span style="color:#9cdcfe">builder</span><span style="color:#cccccc">: </span><span style="color:#ffd700">(</span><span style="color:#9cdcfe">context</span><span style="color:#cccccc">, </span><span style="color:#9cdcfe">constraints</span><span style="color:#ffd700">)</span><span style="color:#cccccc"> </span><span style="color:#ffd700">{</span></div>
<div class="a t" style="left:424px;width:50.5px;text-align:right;top:521.16px;font-size:15.35px;line-height:17.39px;font-family:'Liberation Mono',monospace;color:#6e7681">197</div>
<div class="a t" style="left:506.0px;top:521.16px;font-size:15.35px;line-height:17.39px;font-family:'Liberation Mono',monospace;color:#cccccc"><span style="color:#cccccc">      </span><span style="color:#c586c0">if</span><span style="color:#cccccc"> </span><span style="color:#da70d6">(</span><span style="color:#9cdcfe">_isLoading</span><span style="color:#da70d6">)</span><span style="color:#cccccc"> </span><span style="color:#c586c0">return</span><span style="color:#cccccc"> </span><span style="color:#569cd6">const</span><span style="color:#cccccc"> </span><span style="color:#4ec9b0">Center</span><span style="color:#da70d6">(</span><span style="color:#9cdcfe">child</span><span style="color:#cccccc">: </span><span style="color:#4ec9b0">CircularProgressIndicator</span><span style="color:#179fff">()</span><span style="color:#da70d6">)</span><span style="color:#cccccc">;</span></div>
<div class="a t" style="left:424px;width:50.5px;text-align:right;top:543.91px;font-size:15.35px;line-height:17.39px;font-family:'Liberation Mono',monospace;color:#6e7681">198</div>
<div class="a t" style="left:506.0px;top:543.91px;font-size:15.35px;line-height:17.39px;font-family:'Liberation Mono',monospace;color:#cccccc"><span style="color:#cccccc">      </span><span style="color:#c586c0">if</span><span style="color:#cccccc"> </span><span style="color:#da70d6">(</span><span style="color:#9cdcfe">constraints</span><span style="color:#cccccc">.</span><span style="color:#9cdcfe">maxWidth</span><span style="color:#cccccc"> &gt; </span><span style="color:#b5cea8">600</span><span style="color:#da70d6">)</span><span style="color:#cccccc"> </span><span style="color:#c586c0">return</span><span style="color:#cccccc"> </span><span style="color:#4ec9b0">Scaffold</span><span style="color:#da70d6">(</span><span style="color:#9cdcfe">appBar</span><span style="color:#cccccc">: </span><span style="color:#4ec9b0">AppBar</span><span style="color:#179fff">(</span><span style="color:#9cdcfe">title</span><span style="color:#cccccc">: </span><span style="color:#4ec9b0">Text</span><span style="color:#ffd700">(</span></div>
<div class="a t" style="left:424px;width:50.5px;text-align:right;top:566.66px;font-size:15.35px;line-height:17.39px;font-family:'Liberation Mono',monospace;color:#6e7681">199</div>
<div class="a t" style="left:506.0px;top:566.66px;font-size:15.35px;line-height:17.39px;font-family:'Liberation Mono',monospace;color:#cccccc"><span style="color:#cccccc">      </span><span style="color:#c586c0">return</span><span style="color:#cccccc"> </span><span style="color:#dcdcaa">_buildSmallScreenLayout</span><span style="color:#da70d6">()</span><span style="color:#cccccc">;</span></div>
<div class="a t" style="left:424px;width:50.5px;text-align:right;top:589.41px;font-size:15.35px;line-height:17.39px;font-family:'Liberation Mono',monospace;color:#6e7681">200</div>
<div class="a t" style="left:506.0px;top:589.41px;font-size:15.35px;line-height:17.39px;font-family:'Liberation Mono',monospace;color:#cccccc"><span style="color:#cccccc">    </span><span style="color:#ffd700">}</span><span style="color:#179fff">)</span><span style="color:#cccccc">; </span><span style="color:#8f8f8f">// LayoutBuilder</span></div>
<div class="a t" style="left:424px;width:50.5px;text-align:right;top:612.16px;font-size:15.35px;line-height:17.39px;font-family:'Liberation Mono',monospace;color:#6e7681">201</div>
<div class="a t" style="left:506.0px;top:612.16px;font-size:15.35px;line-height:17.39px;font-family:'Liberation Mono',monospace;color:#cccccc"><span style="color:#cccccc">  </span><span style="color:#da70d6">}</span></div>
<div class="a t" style="left:424px;width:50.5px;text-align:right;top:634.91px;font-size:15.35px;line-height:17.39px;font-family:'Liberation Mono',monospace;color:#cccccc">202</div>
<div class="a t" style="left:506.0px;top:634.91px;font-size:15.35px;line-height:17.39px;font-family:'Liberation Mono',monospace;color:#cccccc"><span style="color:#ffd700">}</span></div>
<svg class="a" style="left:429px;top:157.05px;" width="13" height="15" viewBox="0 0 13 15" fill="none"><path d="M3 1 H12 V14 H1 V10 H3 Z M3 10 V12 H9" stroke="#8b8b8b" stroke-width="1.6" stroke-linejoin="round"/><path d="M5.5 4 H10 M5.5 6.5 H10" stroke="#8b8b8b" stroke-width="1.2"/></svg>
<svg class="a" style="left:429px;top:407.29999999999995px;" width="13" height="15" viewBox="0 0 13 15" fill="none"><path d="M3 1 H12 V14 H1 V10 H3 Z M3 10 V12 H9" stroke="#8b8b8b" stroke-width="1.6" stroke-linejoin="round"/><path d="M5.5 4 H10 M5.5 6.5 H10" stroke="#8b8b8b" stroke-width="1.2"/></svg>
<svg class="a" style="left:428px;top:249.65px;" width="15" height="12" viewBox="0 0 15 12" fill="none"><rect x="1" y="1" width="13" height="10" rx="1" stroke="#8b8b8b" stroke-width="1.6"/><rect x="1" y="1" width="13" height="3.5" fill="#8b8b8b"/></svg>
<div class="a" style="left:1244px;top:158px;width:1px;height:510px;background:#4a4a4a"></div>
<div class="a" style="left:1253px;top:111px;width:108px;height:557px;background:#1f1f1f"></div>
<svg class="a" style="left:1253px;top:111px;opacity:.42" width="92" height="420" viewBox="0 0 92 420" fill="none"><rect x="10.4" y="19.0" width="14.4" height="1.5" fill="#4ec9b0"/><rect x="26.0" y="19.0" width="3.6" height="1.5" fill="#ce9178"/><rect x="30.8" y="19.0" width="12.0" height="1.5" fill="#4ec9b0"/><rect x="44.0" y="19.0" width="1.2" height="1.5" fill="#c586c0"/><rect x="8.0" y="23.8" width="9.6" height="1.5" fill="#cccccc"/><rect x="8.0" y="31.0" width="14.4" height="1.5" fill="#569cd6"/><rect x="23.6" y="31.0" width="6.0" height="1.5" fill="#4ec9b0"/><rect x="10.4" y="33.4" width="6.0" height="1.5" fill="#4ec9b0"/><rect x="17.6" y="33.4" width="1.2" height="1.5" fill="#ce9178"/><rect x="12.8" y="35.8" width="12.0" height="1.5" fill="#4ec9b0"/><rect x="26.0" y="35.8" width="2.4" height="1.5" fill="#dcdcaa"/><rect x="12.8" y="38.2" width="12.0" height="1.5" fill="#c586c0"/><rect x="12.8" y="40.6" width="12.0" height="1.5" fill="#569cd6"/><rect x="15.2" y="47.8" width="10.8" height="1.5" fill="#c586c0"/><rect x="27.2" y="47.8" width="10.8" height="1.5" fill="#dcdcaa"/><rect x="39.2" y="47.8" width="4.8" height="1.5" fill="#9cdcfe"/><rect x="15.2" y="50.2" width="10.8" height="1.5" fill="#dcdcaa"/><rect x="15.2" y="52.6" width="7.2" height="1.5" fill="#c586c0"/><rect x="23.6" y="52.6" width="3.6" height="1.5" fill="#4ec9b0"/><rect x="28.4" y="52.6" width="12.0" height="1.5" fill="#cccccc"/><rect x="41.6" y="52.6" width="4.8" height="1.5" fill="#ce9178"/><rect x="47.6" y="52.6" width="6.0" height="1.5" fill="#9cdcfe"/><rect x="17.6" y="55.0" width="7.2" height="1.5" fill="#4ec9b0"/><rect x="17.6" y="57.4" width="15.6" height="1.5" fill="#dcdcaa"/><rect x="34.4" y="57.4" width="13.2" height="1.5" fill="#cccccc"/><rect x="20.0" y="59.8" width="3.6" height="1.5" fill="#dcdcaa"/><rect x="24.8" y="59.8" width="4.8" height="1.5" fill="#569cd6"/><rect x="17.6" y="62.2" width="7.2" height="1.5" fill="#569cd6"/><rect x="26.0" y="62.2" width="13.2" height="1.5" fill="#569cd6"/><rect x="40.4" y="62.2" width="10.8" height="1.5" fill="#dcdcaa"/><rect x="52.4" y="62.2" width="15.6" height="1.5" fill="#cccccc"/><rect x="69.2" y="62.2" width="6.0" height="1.5" fill="#dcdcaa"/><rect x="17.6" y="67.0" width="3.6" height="1.5" fill="#cccccc"/><rect x="22.4" y="67.0" width="2.4" height="1.5" fill="#9cdcfe"/><rect x="26.0" y="67.0" width="16.8" height="1.5" fill="#dcdcaa"/><rect x="44.0" y="67.0" width="4.8" height="1.5" fill="#569cd6"/><rect x="50.0" y="67.0" width="6.0" height="1.5" fill="#cccccc"/><rect x="57.2" y="67.0" width="9.6" height="1.5" fill="#ce9178"/><rect x="68.0" y="67.0" width="1.2" height="1.5" fill="#4ec9b0"/><rect x="20.0" y="69.4" width="7.2" height="1.5" fill="#9cdcfe"/><rect x="28.4" y="69.4" width="9.6" height="1.5" fill="#ce9178"/><rect x="39.2" y="69.4" width="12.0" height="1.5" fill="#dcdcaa"/><rect x="52.4" y="69.4" width="14.4" height="1.5" fill="#cccccc"/><rect x="22.4" y="71.8" width="4.8" height="1.5" fill="#4ec9b0"/><rect x="28.4" y="71.8" width="4.8" height="1.5" fill="#9cdcfe"/><rect x="34.4" y="71.8" width="6.0" height="1.5" fill="#569cd6"/><rect x="41.6" y="71.8" width="2.4" height="1.5" fill="#4ec9b0"/><rect x="22.4" y="74.2" width="7.2" height="1.5" fill="#4ec9b0"/><rect x="30.8" y="74.2" width="4.8" height="1.5" fill="#cccccc"/><rect x="36.8" y="74.2" width="9.6" height="1.5" fill="#dcdcaa"/><rect x="22.4" y="76.6" width="14.4" height="1.5" fill="#ce9178"/><rect x="20.0" y="79.0" width="16.8" height="1.5" fill="#ce9178"/><rect x="38.0" y="79.0" width="14.4" height="1.5" fill="#ce9178"/><rect x="53.6" y="79.0" width="6.0" height="1.5" fill="#cccccc"/><rect x="22.4" y="81.4" width="10.8" height="1.5" fill="#569cd6"/><rect x="22.4" y="83.8" width="6.0" height="1.5" fill="#cccccc"/><rect x="29.6" y="83.8" width="2.4" height="1.5" fill="#4ec9b0"/><rect x="20.0" y="86.2" width="2.4" height="1.5" fill="#c586c0"/><rect x="23.6" y="86.2" width="4.8" height="1.5" fill="#c586c0"/><rect x="29.6" y="86.2" width="2.4" height="1.5" fill="#dcdcaa"/><rect x="17.6" y="88.6" width="13.2" height="1.5" fill="#cccccc"/><rect x="32.0" y="88.6" width="4.8" height="1.5" fill="#569cd6"/><rect x="17.6" y="91.0" width="8.4" height="1.5" fill="#cccccc"/><rect x="27.2" y="91.0" width="3.6" height="1.5" fill="#4ec9b0"/><rect x="32.0" y="91.0" width="10.8" height="1.5" fill="#cccccc"/><rect x="44.0" y="91.0" width="10.8" height="1.5" fill="#cccccc"/><rect x="56.0" y="91.0" width="7.2" height="1.5" fill="#4ec9b0"/><rect x="64.4" y="91.0" width="3.6" height="1.5" fill="#4ec9b0"/><rect x="17.6" y="93.4" width="15.6" height="1.5" fill="#9cdcfe"/><rect x="34.4" y="93.4" width="12.0" height="1.5" fill="#4ec9b0"/><rect x="47.6" y="93.4" width="6.0" height="1.5" fill="#c586c0"/><rect x="54.8" y="93.4" width="3.6" height="1.5" fill="#9cdcfe"/><rect x="15.2" y="95.8" width="7.2" height="1.5" fill="#569cd6"/><rect x="23.6" y="95.8" width="3.6" height="1.5" fill="#569cd6"/><rect x="28.4" y="95.8" width="7.2" height="1.5" fill="#c586c0"/><rect x="36.8" y="95.8" width="8.4" height="1.5" fill="#9cdcfe"/><rect x="46.4" y="95.8" width="8.4" height="1.5" fill="#ce9178"/><rect x="56.0" y="95.8" width="3.6" height="1.5" fill="#c586c0"/><rect x="15.2" y="98.2" width="6.0" height="1.5" fill="#c586c0"/><rect x="22.4" y="98.2" width="16.8" height="1.5" fill="#ce9178"/><rect x="40.4" y="98.2" width="16.8" height="1.5" fill="#ce9178"/><rect x="58.4" y="98.2" width="6.0" height="1.5" fill="#ce9178"/><rect x="65.6" y="98.2" width="2.4" height="1.5" fill="#ce9178"/><rect x="15.2" y="100.6" width="12.0" height="1.5" fill="#cccccc"/><rect x="28.4" y="100.6" width="6.0" height="1.5" fill="#569cd6"/><rect x="15.2" y="107.8" width="15.6" height="1.5" fill="#c586c0"/><rect x="32.0" y="107.8" width="2.4" height="1.5" fill="#cccccc"/><rect x="15.2" y="110.2" width="3.6" height="1.5" fill="#9cdcfe"/><rect x="20.0" y="110.2" width="3.6" height="1.5" fill="#9cdcfe"/><rect x="24.8" y="110.2" width="10.8" height="1.5" fill="#9cdcfe"/><rect x="36.8" y="110.2" width="8.4" height="1.5" fill="#9cdcfe"/><rect x="46.4" y="110.2" width="1.2" height="1.5" fill="#c586c0"/><rect x="12.8" y="112.6" width="14.4" height="1.5" fill="#dcdcaa"/><rect x="28.4" y="112.6" width="16.8" height="1.5" fill="#569cd6"/><rect x="46.4" y="112.6" width="3.6" height="1.5" fill="#ce9178"/><rect x="51.2" y="112.6" width="2.4" height="1.5" fill="#4ec9b0"/><rect x="12.8" y="115.0" width="4.8" height="1.5" fill="#cccccc"/><rect x="18.8" y="115.0" width="16.8" height="1.5" fill="#569cd6"/><rect x="36.8" y="115.0" width="8.4" height="1.5" fill="#4ec9b0"/><rect x="46.4" y="115.0" width="7.2" height="1.5" fill="#569cd6"/><rect x="15.2" y="117.4" width="10.8" height="1.5" fill="#9cdcfe"/><rect x="15.2" y="119.8" width="4.8" height="1.5" fill="#c586c0"/><rect x="15.2" y="122.2" width="13.2" height="1.5" fill="#cccccc"/><rect x="29.6" y="122.2" width="14.4" height="1.5" fill="#dcdcaa"/><rect x="45.2" y="122.2" width="4.8" height="1.5" fill="#c586c0"/><rect x="51.2" y="122.2" width="12.0" height="1.5" fill="#9cdcfe"/><rect x="64.4" y="122.2" width="2.4" height="1.5" fill="#4ec9b0"/><rect x="12.8" y="124.6" width="15.6" height="1.5" fill="#9cdcfe"/><rect x="29.6" y="124.6" width="9.6" height="1.5" fill="#ce9178"/><rect x="40.4" y="124.6" width="6.0" height="1.5" fill="#ce9178"/><rect x="47.6" y="124.6" width="6.0" height="1.5" fill="#4ec9b0"/><rect x="54.8" y="124.6" width="2.4" height="1.5" fill="#9cdcfe"/><rect x="12.8" y="127.0" width="8.4" height="1.5" fill="#dcdcaa"/><rect x="22.4" y="127.0" width="12.0" height="1.5" fill="#cccccc"/><rect x="35.6" y="127.0" width="4.8" height="1.5" fill="#4ec9b0"/><rect x="41.6" y="127.0" width="15.6" height="1.5" fill="#dcdcaa"/><rect x="58.4" y="127.0" width="3.6" height="1.5" fill="#569cd6"/><rect x="15.2" y="129.4" width="4.8" height="1.5" fill="#c586c0"/><rect x="21.2" y="129.4" width="4.8" height="1.5" fill="#c586c0"/><rect x="27.2" y="129.4" width="12.0" height="1.5" fill="#4ec9b0"/><rect x="40.4" y="129.4" width="10.8" height="1.5" fill="#ce9178"/><rect x="52.4" y="129.4" width="4.8" height="1.5" fill="#c586c0"/><rect x="15.2" y="134.2" width="10.8" height="1.5" fill="#c586c0"/><rect x="27.2" y="134.2" width="3.6" height="1.5" fill="#4ec9b0"/><rect x="15.2" y="136.6" width="12.0" height="1.5" fill="#c586c0"/><rect x="28.4" y="136.6" width="12.0" height="1.5" fill="#cccccc"/><rect x="41.6" y="136.6" width="16.8" height="1.5" fill="#ce9178"/><rect x="59.6" y="136.6" width="3.6" height="1.5" fill="#c586c0"/><rect x="64.4" y="136.6" width="2.4" height="1.5" fill="#9cdcfe"/><rect x="68.0" y="136.6" width="3.6" height="1.5" fill="#dcdcaa"/><rect x="12.8" y="143.8" width="9.6" height="1.5" fill="#dcdcaa"/><rect x="12.8" y="146.2" width="7.2" height="1.5" fill="#cccccc"/><rect x="21.2" y="146.2" width="12.0" height="1.5" fill="#c586c0"/><rect x="34.4" y="146.2" width="16.8" height="1.5" fill="#cccccc"/><rect x="52.4" y="146.2" width="12.0" height="1.5" fill="#9cdcfe"/><rect x="65.6" y="146.2" width="4.8" height="1.5" fill="#c586c0"/><rect x="12.8" y="148.6" width="6.0" height="1.5" fill="#ce9178"/><rect x="20.0" y="148.6" width="10.8" height="1.5" fill="#9cdcfe"/><rect x="32.0" y="148.6" width="9.6" height="1.5" fill="#4ec9b0"/><rect x="42.8" y="148.6" width="9.6" height="1.5" fill="#cccccc"/><rect x="53.6" y="148.6" width="6.0" height="1.5" fill="#4ec9b0"/><rect x="15.2" y="151.0" width="6.0" height="1.5" fill="#569cd6"/><rect x="22.4" y="151.0" width="2.4" height="1.5" fill="#ce9178"/><rect x="15.2" y="153.4" width="14.4" height="1.5" fill="#dcdcaa"/><rect x="30.8" y="153.4" width="4.8" height="1.5" fill="#dcdcaa"/><rect x="36.8" y="153.4" width="4.8" height="1.5" fill="#cccccc"/><rect x="42.8" y="153.4" width="6.0" height="1.5" fill="#569cd6"/><rect x="50.0" y="153.4" width="3.6" height="1.5" fill="#cccccc"/><rect x="54.8" y="153.4" width="10.8" height="1.5" fill="#9cdcfe"/><rect x="66.8" y="153.4" width="2.4" height="1.5" fill="#ce9178"/><rect x="17.6" y="155.8" width="9.6" height="1.5" fill="#dcdcaa"/><rect x="28.4" y="155.8" width="9.6" height="1.5" fill="#9cdcfe"/><rect x="39.2" y="155.8" width="8.4" height="1.5" fill="#dcdcaa"/><rect x="48.8" y="155.8" width="3.6" height="1.5" fill="#569cd6"/><rect x="53.6" y="155.8" width="7.2" height="1.5" fill="#4ec9b0"/><rect x="20.0" y="158.2" width="15.6" height="1.5" fill="#4ec9b0"/><rect x="36.8" y="158.2" width="9.6" height="1.5" fill="#dcdcaa"/><rect x="47.6" y="158.2" width="10.8" height="1.5" fill="#c586c0"/><rect x="17.6" y="160.6" width="13.2" height="1.5" fill="#9cdcfe"/><rect x="15.2" y="163.0" width="7.2" height="1.5" fill="#dcdcaa"/><rect x="23.6" y="163.0" width="2.4" height="1.5" fill="#ce9178"/><rect x="15.2" y="165.4" width="14.4" height="1.5" fill="#ce9178"/><rect x="30.8" y="165.4" width="7.2" height="1.5" fill="#cccccc"/><rect x="39.2" y="165.4" width="4.8" height="1.5" fill="#c586c0"/><rect x="45.2" y="165.4" width="7.2" height="1.5" fill="#c586c0"/><rect x="15.2" y="167.8" width="7.2" height="1.5" fill="#4ec9b0"/><rect x="23.6" y="167.8" width="2.4" height="1.5" fill="#569cd6"/><rect x="12.8" y="170.2" width="2.4" height="1.5" fill="#569cd6"/><rect x="16.4" y="170.2" width="3.6" height="1.5" fill="#ce9178"/><rect x="21.2" y="170.2" width="7.2" height="1.5" fill="#4ec9b0"/><rect x="29.6" y="170.2" width="8.4" height="1.5" fill="#ce9178"/><rect x="12.8" y="172.6" width="10.8" height="1.5" fill="#4ec9b0"/><rect x="24.8" y="172.6" width="1.2" height="1.5" fill="#c586c0"/><rect x="12.8" y="175.0" width="4.8" height="1.5" fill="#4ec9b0"/><rect x="18.8" y="175.0" width="12.0" height="1.5" fill="#569cd6"/><rect x="32.0" y="175.0" width="6.0" height="1.5" fill="#4ec9b0"/><rect x="39.2" y="175.0" width="4.8" height="1.5" fill="#dcdcaa"/><rect x="45.2" y="175.0" width="2.4" height="1.5" fill="#9cdcfe"/><rect x="48.8" y="175.0" width="6.0" height="1.5" fill="#dcdcaa"/><rect x="56.0" y="175.0" width="8.4" height="1.5" fill="#dcdcaa"/><rect x="12.8" y="177.4" width="10.8" height="1.5" fill="#c586c0"/><rect x="24.8" y="177.4" width="14.4" height="1.5" fill="#9cdcfe"/><rect x="10.4" y="179.8" width="2.4" height="1.5" fill="#4ec9b0"/><rect x="14.0" y="179.8" width="2.4" height="1.5" fill="#569cd6"/><rect x="17.6" y="179.8" width="12.0" height="1.5" fill="#c586c0"/><rect x="30.8" y="179.8" width="3.6" height="1.5" fill="#c586c0"/><rect x="12.8" y="182.2" width="12.0" height="1.5" fill="#ce9178"/><rect x="15.2" y="184.6" width="9.6" height="1.5" fill="#c586c0"/><rect x="26.0" y="184.6" width="7.2" height="1.5" fill="#569cd6"/><rect x="34.4" y="184.6" width="6.0" height="1.5" fill="#9cdcfe"/><rect x="41.6" y="184.6" width="8.4" height="1.5" fill="#9cdcfe"/><rect x="51.2" y="184.6" width="9.6" height="1.5" fill="#569cd6"/><rect x="17.6" y="187.0" width="2.4" height="1.5" fill="#ce9178"/><rect x="21.2" y="187.0" width="4.8" height="1.5" fill="#4ec9b0"/><rect x="27.2" y="187.0" width="3.6" height="1.5" fill="#569cd6"/><rect x="32.0" y="187.0" width="15.6" height="1.5" fill="#dcdcaa"/><rect x="15.2" y="189.4" width="10.8" height="1.5" fill="#ce9178"/><rect x="15.2" y="191.8" width="6.0" height="1.5" fill="#569cd6"/><rect x="22.4" y="191.8" width="7.2" height="1.5" fill="#4ec9b0"/><rect x="30.8" y="191.8" width="10.8" height="1.5" fill="#9cdcfe"/><rect x="42.8" y="191.8" width="4.8" height="1.5" fill="#dcdcaa"/><rect x="48.8" y="191.8" width="10.8" height="1.5" fill="#4ec9b0"/><rect x="60.8" y="191.8" width="4.8" height="1.5" fill="#dcdcaa"/><rect x="15.2" y="194.2" width="2.4" height="1.5" fill="#dcdcaa"/><rect x="18.8" y="194.2" width="6.0" height="1.5" fill="#dcdcaa"/><rect x="26.0" y="194.2" width="4.8" height="1.5" fill="#4ec9b0"/><rect x="32.0" y="194.2" width="6.0" height="1.5" fill="#cccccc"/><rect x="15.2" y="199.0" width="12.0" height="1.5" fill="#ce9178"/><rect x="28.4" y="199.0" width="2.4" height="1.5" fill="#4ec9b0"/><rect x="32.0" y="199.0" width="6.0" height="1.5" fill="#ce9178"/><rect x="12.8" y="203.8" width="2.4" height="1.5" fill="#dcdcaa"/><rect x="16.4" y="203.8" width="7.2" height="1.5" fill="#569cd6"/><rect x="24.8" y="203.8" width="6.0" height="1.5" fill="#4ec9b0"/><rect x="32.0" y="203.8" width="13.2" height="1.5" fill="#c586c0"/><rect x="46.4" y="203.8" width="1.2" height="1.5" fill="#9cdcfe"/><rect x="15.2" y="206.2" width="15.6" height="1.5" fill="#cccccc"/><rect x="32.0" y="206.2" width="4.8" height="1.5" fill="#dcdcaa"/><rect x="38.0" y="206.2" width="6.0" height="1.5" fill="#c586c0"/><rect x="12.8" y="208.6" width="14.4" height="1.5" fill="#cccccc"/><rect x="28.4" y="208.6" width="15.6" height="1.5" fill="#569cd6"/><rect x="45.2" y="208.6" width="10.8" height="1.5" fill="#c586c0"/><rect x="10.4" y="211.0" width="13.2" height="1.5" fill="#ce9178"/><rect x="24.8" y="211.0" width="15.6" height="1.5" fill="#569cd6"/><rect x="41.6" y="211.0" width="15.6" height="1.5" fill="#569cd6"/><rect x="58.4" y="211.0" width="6.0" height="1.5" fill="#4ec9b0"/><rect x="65.6" y="211.0" width="1.2" height="1.5" fill="#4ec9b0"/><rect x="10.4" y="213.4" width="9.6" height="1.5" fill="#ce9178"/><rect x="21.2" y="213.4" width="1.2" height="1.5" fill="#c586c0"/><rect x="10.4" y="220.6" width="7.2" height="1.5" fill="#4ec9b0"/><rect x="18.8" y="220.6" width="10.8" height="1.5" fill="#ce9178"/><rect x="30.8" y="220.6" width="3.6" height="1.5" fill="#569cd6"/><rect x="35.6" y="220.6" width="12.0" height="1.5" fill="#c586c0"/><rect x="48.8" y="220.6" width="3.6" height="1.5" fill="#569cd6"/><rect x="12.8" y="223.0" width="16.8" height="1.5" fill="#4ec9b0"/><rect x="30.8" y="223.0" width="6.0" height="1.5" fill="#9cdcfe"/><rect x="12.8" y="225.4" width="15.6" height="1.5" fill="#569cd6"/><rect x="29.6" y="225.4" width="4.8" height="1.5" fill="#cccccc"/><rect x="10.4" y="227.8" width="14.4" height="1.5" fill="#dcdcaa"/><rect x="26.0" y="227.8" width="16.8" height="1.5" fill="#4ec9b0"/><rect x="44.0" y="227.8" width="7.2" height="1.5" fill="#569cd6"/><rect x="8.0" y="230.2" width="4.8" height="1.5" fill="#dcdcaa"/><rect x="14.0" y="230.2" width="7.2" height="1.5" fill="#569cd6"/><rect x="22.4" y="230.2" width="15.6" height="1.5" fill="#569cd6"/><rect x="39.2" y="230.2" width="7.2" height="1.5" fill="#c586c0"/><rect x="47.6" y="230.2" width="10.8" height="1.5" fill="#9cdcfe"/><rect x="8.0" y="237.4" width="6.0" height="1.5" fill="#569cd6"/><rect x="15.2" y="237.4" width="10.8" height="1.5" fill="#dcdcaa"/><rect x="27.2" y="237.4" width="15.6" height="1.5" fill="#c586c0"/><rect x="44.0" y="237.4" width="7.2" height="1.5" fill="#cccccc"/><rect x="52.4" y="237.4" width="10.8" height="1.5" fill="#cccccc"/><rect x="64.4" y="237.4" width="1.2" height="1.5" fill="#4ec9b0"/><rect x="8.0" y="239.8" width="3.6" height="1.5" fill="#cccccc"/><rect x="12.8" y="239.8" width="2.4" height="1.5" fill="#dcdcaa"/><rect x="16.4" y="239.8" width="10.8" height="1.5" fill="#4ec9b0"/><rect x="28.4" y="239.8" width="7.2" height="1.5" fill="#cccccc"/><rect x="10.4" y="242.2" width="6.0" height="1.5" fill="#4ec9b0"/><rect x="17.6" y="242.2" width="13.2" height="1.5" fill="#4ec9b0"/><rect x="10.4" y="244.6" width="4.8" height="1.5" fill="#c586c0"/><rect x="16.4" y="244.6" width="14.4" height="1.5" fill="#c586c0"/><rect x="32.0" y="244.6" width="7.2" height="1.5" fill="#4ec9b0"/><rect x="40.4" y="244.6" width="2.4" height="1.5" fill="#dcdcaa"/><rect x="12.8" y="247.0" width="2.4" height="1.5" fill="#9cdcfe"/><rect x="16.4" y="247.0" width="2.4" height="1.5" fill="#cccccc"/><rect x="20.0" y="247.0" width="14.4" height="1.5" fill="#cccccc"/><rect x="35.6" y="247.0" width="9.6" height="1.5" fill="#dcdcaa"/><rect x="46.4" y="247.0" width="1.2" height="1.5" fill="#9cdcfe"/><rect x="15.2" y="249.4" width="3.6" height="1.5" fill="#ce9178"/><rect x="20.0" y="249.4" width="8.4" height="1.5" fill="#4ec9b0"/><rect x="29.6" y="249.4" width="8.4" height="1.5" fill="#ce9178"/><rect x="39.2" y="249.4" width="4.8" height="1.5" fill="#ce9178"/><rect x="15.2" y="251.8" width="4.8" height="1.5" fill="#dcdcaa"/><rect x="12.8" y="254.2" width="9.6" height="1.5" fill="#ce9178"/><rect x="23.6" y="254.2" width="13.2" height="1.5" fill="#4ec9b0"/><rect x="38.0" y="254.2" width="8.4" height="1.5" fill="#cccccc"/><rect x="10.4" y="256.6" width="3.6" height="1.5" fill="#4ec9b0"/><rect x="15.2" y="256.6" width="14.4" height="1.5" fill="#dcdcaa"/><rect x="30.8" y="256.6" width="4.8" height="1.5" fill="#9cdcfe"/><rect x="10.4" y="259.0" width="12.0" height="1.5" fill="#dcdcaa"/><rect x="23.6" y="259.0" width="6.0" height="1.5" fill="#ce9178"/><rect x="30.8" y="259.0" width="8.4" height="1.5" fill="#ce9178"/><rect x="40.4" y="259.0" width="7.2" height="1.5" fill="#4ec9b0"/><rect x="12.8" y="261.4" width="12.0" height="1.5" fill="#9cdcfe"/><rect x="26.0" y="261.4" width="15.6" height="1.5" fill="#4ec9b0"/><rect x="42.8" y="261.4" width="2.4" height="1.5" fill="#569cd6"/><rect x="46.4" y="261.4" width="9.6" height="1.5" fill="#cccccc"/><rect x="57.2" y="261.4" width="2.4" height="1.5" fill="#ce9178"/><rect x="12.8" y="263.8" width="2.4" height="1.5" fill="#c586c0"/><rect x="16.4" y="263.8" width="4.8" height="1.5" fill="#9cdcfe"/><rect x="22.4" y="263.8" width="10.8" height="1.5" fill="#cccccc"/><rect x="34.4" y="263.8" width="8.4" height="1.5" fill="#dcdcaa"/><rect x="44.0" y="263.8" width="7.2" height="1.5" fill="#dcdcaa"/><rect x="52.4" y="263.8" width="2.4" height="1.5" fill="#569cd6"/><rect x="12.8" y="266.2" width="14.4" height="1.5" fill="#9cdcfe"/><rect x="28.4" y="266.2" width="7.2" height="1.5" fill="#cccccc"/><rect x="36.8" y="266.2" width="10.8" height="1.5" fill="#569cd6"/><rect x="12.8" y="268.6" width="4.8" height="1.5" fill="#4ec9b0"/><rect x="18.8" y="268.6" width="6.0" height="1.5" fill="#c586c0"/><rect x="26.0" y="268.6" width="16.8" height="1.5" fill="#cccccc"/><rect x="44.0" y="268.6" width="12.0" height="1.5" fill="#9cdcfe"/><rect x="57.2" y="268.6" width="9.6" height="1.5" fill="#dcdcaa"/><rect x="15.2" y="271.0" width="4.8" height="1.5" fill="#c586c0"/><rect x="21.2" y="271.0" width="6.0" height="1.5" fill="#9cdcfe"/><rect x="28.4" y="271.0" width="3.6" height="1.5" fill="#9cdcfe"/><rect x="33.2" y="271.0" width="8.4" height="1.5" fill="#c586c0"/><rect x="42.8" y="271.0" width="3.6" height="1.5" fill="#dcdcaa"/><rect x="47.6" y="271.0" width="4.8" height="1.5" fill="#dcdcaa"/><rect x="15.2" y="273.4" width="6.0" height="1.5" fill="#ce9178"/><rect x="17.6" y="275.8" width="6.0" height="1.5" fill="#cccccc"/><rect x="24.8" y="275.8" width="7.2" height="1.5" fill="#dcdcaa"/><rect x="33.2" y="275.8" width="16.8" height="1.5" fill="#4ec9b0"/><rect x="51.2" y="275.8" width="10.8" height="1.5" fill="#dcdcaa"/><rect x="17.6" y="278.2" width="14.4" height="1.5" fill="#c586c0"/><rect x="17.6" y="280.6" width="7.2" height="1.5" fill="#9cdcfe"/><rect x="26.0" y="280.6" width="2.4" height="1.5" fill="#cccccc"/><rect x="20.0" y="283.0" width="2.4" height="1.5" fill="#9cdcfe"/><rect x="23.6" y="283.0" width="2.4" height="1.5" fill="#cccccc"/><rect x="27.2" y="283.0" width="15.6" height="1.5" fill="#ce9178"/><rect x="44.0" y="283.0" width="3.6" height="1.5" fill="#cccccc"/><rect x="22.4" y="285.4" width="3.6" height="1.5" fill="#cccccc"/><rect x="24.8" y="287.8" width="6.0" height="1.5" fill="#ce9178"/><rect x="32.0" y="287.8" width="3.6" height="1.5" fill="#9cdcfe"/><rect x="36.8" y="287.8" width="4.8" height="1.5" fill="#9cdcfe"/><rect x="42.8" y="287.8" width="12.0" height="1.5" fill="#569cd6"/><rect x="56.0" y="287.8" width="3.6" height="1.5" fill="#ce9178"/><rect x="60.8" y="287.8" width="2.4" height="1.5" fill="#569cd6"/><rect x="27.2" y="290.2" width="10.8" height="1.5" fill="#ce9178"/><rect x="27.2" y="295.0" width="2.4" height="1.5" fill="#569cd6"/><rect x="30.8" y="295.0" width="15.6" height="1.5" fill="#dcdcaa"/><rect x="47.6" y="295.0" width="4.8" height="1.5" fill="#569cd6"/><rect x="53.6" y="295.0" width="7.2" height="1.5" fill="#c586c0"/><rect x="62.0" y="295.0" width="13.2" height="1.5" fill="#cccccc"/><rect x="24.8" y="297.4" width="3.6" height="1.5" fill="#dcdcaa"/><rect x="29.6" y="297.4" width="7.2" height="1.5" fill="#c586c0"/><rect x="24.8" y="299.8" width="16.8" height="1.5" fill="#c586c0"/><rect x="42.8" y="299.8" width="2.4" height="1.5" fill="#4ec9b0"/><rect x="27.2" y="302.2" width="8.4" height="1.5" fill="#569cd6"/><rect x="36.8" y="302.2" width="6.0" height="1.5" fill="#cccccc"/><rect x="44.0" y="302.2" width="8.4" height="1.5" fill="#9cdcfe"/><rect x="24.8" y="304.6" width="15.6" height="1.5" fill="#569cd6"/><rect x="41.6" y="304.6" width="7.2" height="1.5" fill="#4ec9b0"/><rect x="50.0" y="304.6" width="2.4" height="1.5" fill="#9cdcfe"/><rect x="53.6" y="304.6" width="7.2" height="1.5" fill="#569cd6"/><rect x="22.4" y="307.0" width="6.0" height="1.5" fill="#569cd6"/><rect x="29.6" y="307.0" width="9.6" height="1.5" fill="#dcdcaa"/><rect x="40.4" y="307.0" width="6.0" height="1.5" fill="#cccccc"/><rect x="24.8" y="311.8" width="14.4" height="1.5" fill="#cccccc"/><rect x="40.4" y="311.8" width="6.0" height="1.5" fill="#4ec9b0"/><rect x="47.6" y="311.8" width="9.6" height="1.5" fill="#dcdcaa"/><rect x="22.4" y="314.2" width="10.8" height="1.5" fill="#9cdcfe"/><rect x="34.4" y="314.2" width="7.2" height="1.5" fill="#ce9178"/><rect x="22.4" y="316.6" width="6.0" height="1.5" fill="#dcdcaa"/><rect x="29.6" y="316.6" width="16.8" height="1.5" fill="#dcdcaa"/><rect x="47.6" y="316.6" width="3.6" height="1.5" fill="#c586c0"/><rect x="52.4" y="316.6" width="9.6" height="1.5" fill="#c586c0"/><rect x="22.4" y="319.0" width="9.6" height="1.5" fill="#569cd6"/><rect x="33.2" y="319.0" width="2.4" height="1.5" fill="#c586c0"/><rect x="36.8" y="319.0" width="4.8" height="1.5" fill="#cccccc"/><rect x="42.8" y="319.0" width="2.4" height="1.5" fill="#9cdcfe"/><rect x="46.4" y="319.0" width="2.4" height="1.5" fill="#c586c0"/><rect x="50.0" y="319.0" width="4.8" height="1.5" fill="#cccccc"/><rect x="56.0" y="319.0" width="2.4" height="1.5" fill="#569cd6"/><rect x="59.6" y="319.0" width="2.4" height="1.5" fill="#9cdcfe"/><rect x="63.2" y="319.0" width="1.2" height="1.5" fill="#cccccc"/><rect x="22.4" y="321.4" width="3.6" height="1.5" fill="#9cdcfe"/><rect x="27.2" y="321.4" width="8.4" height="1.5" fill="#9cdcfe"/><rect x="24.8" y="323.8" width="7.2" height="1.5" fill="#569cd6"/><rect x="24.8" y="326.2" width="10.8" height="1.5" fill="#9cdcfe"/><rect x="36.8" y="326.2" width="3.6" height="1.5" fill="#4ec9b0"/><rect x="41.6" y="326.2" width="3.6" height="1.5" fill="#dcdcaa"/><rect x="46.4" y="326.2" width="3.6" height="1.5" fill="#dcdcaa"/><rect x="51.2" y="326.2" width="3.6" height="1.5" fill="#4ec9b0"/><rect x="24.8" y="328.6" width="8.4" height="1.5" fill="#ce9178"/><rect x="34.4" y="328.6" width="7.2" height="1.5" fill="#ce9178"/><rect x="42.8" y="328.6" width="15.6" height="1.5" fill="#cccccc"/><rect x="24.8" y="333.4" width="12.0" height="1.5" fill="#cccccc"/><rect x="38.0" y="333.4" width="6.0" height="1.5" fill="#dcdcaa"/><rect x="45.2" y="333.4" width="8.4" height="1.5" fill="#569cd6"/><rect x="54.8" y="333.4" width="2.4" height="1.5" fill="#4ec9b0"/><rect x="24.8" y="335.8" width="16.8" height="1.5" fill="#cccccc"/><rect x="42.8" y="335.8" width="2.4" height="1.5" fill="#cccccc"/><rect x="46.4" y="335.8" width="2.4" height="1.5" fill="#cccccc"/><rect x="50.0" y="335.8" width="3.6" height="1.5" fill="#ce9178"/><rect x="54.8" y="335.8" width="2.4" height="1.5" fill="#dcdcaa"/><rect x="58.4" y="335.8" width="6.0" height="1.5" fill="#569cd6"/><rect x="65.6" y="335.8" width="3.6" height="1.5" fill="#c586c0"/><rect x="70.4" y="335.8" width="7.2" height="1.5" fill="#dcdcaa"/><rect x="22.4" y="338.2" width="15.6" height="1.5" fill="#569cd6"/><rect x="39.2" y="338.2" width="7.2" height="1.5" fill="#dcdcaa"/><rect x="22.4" y="340.6" width="4.8" height="1.5" fill="#ce9178"/><rect x="20.0" y="343.0" width="6.0" height="1.5" fill="#4ec9b0"/><rect x="22.4" y="345.4" width="16.8" height="1.5" fill="#dcdcaa"/><rect x="40.4" y="345.4" width="9.6" height="1.5" fill="#ce9178"/><rect x="51.2" y="345.4" width="4.8" height="1.5" fill="#9cdcfe"/><rect x="22.4" y="347.8" width="4.8" height="1.5" fill="#569cd6"/><rect x="22.4" y="350.2" width="6.0" height="1.5" fill="#dcdcaa"/><rect x="29.6" y="350.2" width="8.4" height="1.5" fill="#cccccc"/><rect x="39.2" y="350.2" width="8.4" height="1.5" fill="#ce9178"/><rect x="48.8" y="350.2" width="16.8" height="1.5" fill="#c586c0"/><rect x="66.8" y="350.2" width="3.6" height="1.5" fill="#c586c0"/><rect x="71.6" y="350.2" width="1.2" height="1.5" fill="#cccccc"/><rect x="22.4" y="352.6" width="3.6" height="1.5" fill="#569cd6"/><rect x="27.2" y="352.6" width="2.4" height="1.5" fill="#cccccc"/><rect x="30.8" y="352.6" width="12.0" height="1.5" fill="#c586c0"/><rect x="44.0" y="352.6" width="8.4" height="1.5" fill="#9cdcfe"/><rect x="53.6" y="352.6" width="4.8" height="1.5" fill="#4ec9b0"/><rect x="22.4" y="355.0" width="3.6" height="1.5" fill="#9cdcfe"/><rect x="27.2" y="355.0" width="3.6" height="1.5" fill="#cccccc"/><rect x="32.0" y="355.0" width="10.8" height="1.5" fill="#569cd6"/><rect x="44.0" y="355.0" width="10.8" height="1.5" fill="#9cdcfe"/><rect x="56.0" y="355.0" width="6.0" height="1.5" fill="#9cdcfe"/><rect x="63.2" y="355.0" width="9.6" height="1.5" fill="#cccccc"/><rect x="22.4" y="357.4" width="16.8" height="1.5" fill="#569cd6"/><rect x="40.4" y="357.4" width="16.8" height="1.5" fill="#4ec9b0"/><rect x="58.4" y="357.4" width="9.6" height="1.5" fill="#ce9178"/><rect x="22.4" y="359.8" width="7.2" height="1.5" fill="#dcdcaa"/><rect x="30.8" y="359.8" width="7.2" height="1.5" fill="#569cd6"/><rect x="39.2" y="359.8" width="7.2" height="1.5" fill="#9cdcfe"/><rect x="47.6" y="359.8" width="10.8" height="1.5" fill="#9cdcfe"/><rect x="59.6" y="359.8" width="4.8" height="1.5" fill="#9cdcfe"/><rect x="65.6" y="359.8" width="4.8" height="1.5" fill="#9cdcfe"/><rect x="22.4" y="362.2" width="3.6" height="1.5" fill="#cccccc"/><rect x="27.2" y="362.2" width="7.2" height="1.5" fill="#9cdcfe"/><rect x="35.6" y="362.2" width="12.0" height="1.5" fill="#c586c0"/><rect x="48.8" y="362.2" width="2.4" height="1.5" fill="#569cd6"/><rect x="24.8" y="364.6" width="3.6" height="1.5" fill="#4ec9b0"/><rect x="29.6" y="364.6" width="2.4" height="1.5" fill="#ce9178"/><rect x="27.2" y="367.0" width="2.4" height="1.5" fill="#dcdcaa"/><rect x="30.8" y="367.0" width="6.0" height="1.5" fill="#4ec9b0"/><rect x="38.0" y="367.0" width="2.4" height="1.5" fill="#9cdcfe"/><rect x="41.6" y="367.0" width="13.2" height="1.5" fill="#ce9178"/><rect x="56.0" y="367.0" width="3.6" height="1.5" fill="#9cdcfe"/><rect x="27.2" y="369.4" width="4.8" height="1.5" fill="#cccccc"/><rect x="33.2" y="369.4" width="13.2" height="1.5" fill="#dcdcaa"/><rect x="47.6" y="369.4" width="16.8" height="1.5" fill="#ce9178"/><rect x="65.6" y="369.4" width="4.8" height="1.5" fill="#4ec9b0"/><rect x="27.2" y="374.2" width="2.4" height="1.5" fill="#dcdcaa"/><rect x="30.8" y="374.2" width="8.4" height="1.5" fill="#9cdcfe"/><rect x="40.4" y="374.2" width="2.4" height="1.5" fill="#9cdcfe"/><rect x="44.0" y="374.2" width="3.6" height="1.5" fill="#4ec9b0"/><rect x="27.2" y="376.6" width="4.8" height="1.5" fill="#cccccc"/><rect x="27.2" y="379.0" width="7.2" height="1.5" fill="#4ec9b0"/><rect x="35.6" y="379.0" width="6.0" height="1.5" fill="#4ec9b0"/><rect x="42.8" y="379.0" width="16.8" height="1.5" fill="#cccccc"/><rect x="60.8" y="379.0" width="12.0" height="1.5" fill="#cccccc"/><rect x="74.0" y="379.0" width="3.6" height="1.5" fill="#cccccc"/><rect x="27.2" y="383.8" width="12.0" height="1.5" fill="#4ec9b0"/><rect x="40.4" y="383.8" width="14.4" height="1.5" fill="#9cdcfe"/><rect x="56.0" y="383.8" width="9.6" height="1.5" fill="#569cd6"/><rect x="66.8" y="383.8" width="7.2" height="1.5" fill="#cccccc"/><rect x="75.2" y="383.8" width="4.8" height="1.5" fill="#569cd6"/><rect x="24.8" y="386.2" width="15.6" height="1.5" fill="#c586c0"/><rect x="41.6" y="386.2" width="8.4" height="1.5" fill="#cccccc"/><rect x="51.2" y="386.2" width="1.2" height="1.5" fill="#4ec9b0"/><rect x="24.8" y="388.6" width="6.0" height="1.5" fill="#cccccc"/><rect x="32.0" y="388.6" width="15.6" height="1.5" fill="#cccccc"/><rect x="48.8" y="388.6" width="6.0" height="1.5" fill="#4ec9b0"/><rect x="56.0" y="388.6" width="9.6" height="1.5" fill="#9cdcfe"/><rect x="66.8" y="388.6" width="9.6" height="1.5" fill="#4ec9b0"/><rect x="77.6" y="388.6" width="1.2" height="1.5" fill="#cccccc"/><rect x="24.8" y="391.0" width="16.8" height="1.5" fill="#9cdcfe"/><rect x="42.8" y="391.0" width="4.8" height="1.5" fill="#4ec9b0"/><rect x="48.8" y="391.0" width="2.4" height="1.5" fill="#c586c0"/><rect x="52.4" y="391.0" width="4.8" height="1.5" fill="#569cd6"/><rect x="58.4" y="391.0" width="6.0" height="1.5" fill="#cccccc"/><rect x="24.8" y="395.8" width="4.8" height="1.5" fill="#9cdcfe"/><rect x="30.8" y="395.8" width="8.4" height="1.5" fill="#dcdcaa"/><rect x="40.4" y="395.8" width="4.8" height="1.5" fill="#c586c0"/><rect x="46.4" y="395.8" width="4.8" height="1.5" fill="#4ec9b0"/><rect x="52.4" y="395.8" width="3.6" height="1.5" fill="#cccccc"/><rect x="57.2" y="395.8" width="10.8" height="1.5" fill="#ce9178"/><rect x="24.8" y="398.2" width="4.8" height="1.5" fill="#ce9178"/><rect x="30.8" y="398.2" width="2.4" height="1.5" fill="#cccccc"/><rect x="34.4" y="398.2" width="8.4" height="1.5" fill="#4ec9b0"/><rect x="44.0" y="398.2" width="8.4" height="1.5" fill="#569cd6"/><rect x="24.8" y="400.6" width="16.8" height="1.5" fill="#ce9178"/><rect x="42.8" y="400.6" width="6.0" height="1.5" fill="#c586c0"/><rect x="50.0" y="400.6" width="9.6" height="1.5" fill="#c586c0"/><rect x="60.8" y="400.6" width="6.0" height="1.5" fill="#ce9178"/><rect x="68.0" y="400.6" width="9.6" height="1.5" fill="#9cdcfe"/><rect x="22.4" y="403.0" width="12.0" height="1.5" fill="#9cdcfe"/><rect x="35.6" y="403.0" width="9.6" height="1.5" fill="#dcdcaa"/><rect x="46.4" y="403.0" width="3.6" height="1.5" fill="#9cdcfe"/><rect x="51.2" y="403.0" width="6.0" height="1.5" fill="#569cd6"/></svg>
<div class="a" style="left:1262px;top:117.0px;width:4px;height:1.6px;background:#569cd6;opacity:.6"></div>
<div class="a" style="left:1268px;top:117.0px;width:62px;height:1.6px;background:repeating-linear-gradient(90deg,#ce9178 0 4px,transparent 4px 5.5px);opacity:.6"></div>
<div class="a" style="left:1262px;top:119.4px;width:4px;height:1.6px;background:#569cd6;opacity:.6"></div>
<div class="a" style="left:1268px;top:119.4px;width:68px;height:1.6px;background:repeating-linear-gradient(90deg,#ce9178 0 4px,transparent 4px 5.5px);opacity:.6"></div>
<div class="a" style="left:1262px;top:121.8px;width:4px;height:1.6px;background:#569cd6;opacity:.6"></div>
<div class="a" style="left:1268px;top:121.8px;width:74px;height:1.6px;background:repeating-linear-gradient(90deg,#ce9178 0 4px,transparent 4px 5.5px);opacity:.6"></div>
<div class="a" style="left:1262px;top:124.2px;width:4px;height:1.6px;background:#569cd6;opacity:.6"></div>
<div class="a" style="left:1268px;top:124.2px;width:62px;height:1.6px;background:repeating-linear-gradient(90deg,#ce9178 0 4px,transparent 4px 5.5px);opacity:.6"></div>
<div class="a" style="left:1262px;top:126.6px;width:4px;height:1.6px;background:#569cd6;opacity:.6"></div>
<div class="a" style="left:1268px;top:126.6px;width:68px;height:1.6px;background:repeating-linear-gradient(90deg,#ce9178 0 4px,transparent 4px 5.5px);opacity:.6"></div>
<div class="a" style="left:1261px;top:240px;width:84px;height:4.5px;background:#2f7fd0"></div>
<div class="a" style="left:1261px;top:378px;width:84px;height:3px;background:#2f7fd0;opacity:.8"></div>
<div class="a" style="left:1344px;top:111px;width:1px;height:557px;background:#2a2a2a"></div>
<div class="a" style="left:1356px;top:272px;width:5px;height:8px;background:#3794ff"></div>
<div class="a" style="left:1356px;top:386px;width:5px;height:8px;background:#3794ff"></div>
<div class="a" style="left:1345px;top:606px;width:15px;height:2px;background:#6a6a6a"></div>
<div class="a" style="left:426px;top:111px;width:827px;height:47px;background:#1f1f1f"></div>
<div class="a" style="left:426px;top:157px;width:827px;height:4px;background:linear-gradient(rgba(0,0,0,.55),rgba(0,0,0,0))"></div>
<div class="a t" style="left:424px;width:50.5px;text-align:right;top:115.41px;font-size:15.35px;line-height:17.39px;font-family:'Liberation Mono',monospace;color:#6e7681">24</div>
<div class="a t" style="left:506.0px;top:115.41px;font-size:15.35px;line-height:17.39px;font-family:'Liberation Mono',monospace;color:#cccccc"><span style="color:#569cd6">class</span><span style="color:#cccccc"> </span><span style="color:#4ec9b0">_OrderScreenState</span><span style="color:#cccccc"> </span><span style="color:#569cd6">extends</span><span style="color:#cccccc"> </span><span style="color:#4ec9b0">State</span></div>
<div class="a t" style="left:424px;width:50.5px;text-align:right;top:138.41px;font-size:15.35px;line-height:17.39px;font-family:'Liberation Mono',monospace;color:#6e7681">155</div>
<div class="a t" style="left:506.0px;top:138.41px;font-size:15.35px;line-height:17.39px;font-family:'Liberation Mono',monospace;color:#cccccc"><span style="color:#cccccc">  </span><span style="color:#4ec9b0">Widget</span><span style="color:#cccccc"> </span><span style="color:#dcdcaa">_buildOrderPanel</span><span style="color:#da70d6">()</span><span style="color:#cccccc"> </span><span style="color:#da70d6">{</span></div>
<div class="a" style="left:734px;top:108px;width:502px;height:44px;background:#242424;border:1px solid #313131;border-top:none;border-radius:0 0 6px 6px;box-shadow:0 2px 6px rgba(0,0,0,.6)"></div>
<div class="a" style="left:734px;top:111px;width:3.5px;height:40px;background:#484848"></div>
<svg class="a" style="left:745px;top:124.5px;" width="9" height="13" viewBox="0 0 9 13" fill="none"><path d="M2 1 L7.5 6.5 L2 12" stroke="#cccccc" stroke-width="1.4"/></svg>
<div class="a" style="left:759px;top:116px;width:266px;height:30px;background:#313131;border:1px solid #3a3a3a;border-radius:2px"></div>
<div class="a t" style="left:768px;top:122.92px;font-size:15px;line-height:16.75px;color:#9a9a9a;font-family:'Liberation Sans',sans-serif;font-weight:400;">Find</div>
<div class="a t" style="left:949px;top:123.33px;font-size:14px;line-height:15.64px;color:#cccccc;font-family:'Liberation Sans',sans-serif;font-weight:400;">Aa</div>
<div class="a t" style="left:974px;top:122.33px;font-size:14px;line-height:15.64px;color:#cccccc;font-family:'Liberation Sans',sans-serif;font-weight:400;">ab</div>
<div class="a" style="left:975px;top:139px;width:19px;height:1.5px;background:#cccccc"></div>
<div class="a" style="left:974px;top:137px;width:1.5px;height:3px;background:#cccccc"></div>
<div class="a" style="left:992.5px;top:137px;width:1.5px;height:3px;background:#cccccc"></div>
<div class="a" style="left:1002px;top:134px;width:6px;height:6px;background:#cccccc"></div>
<div class="a t" style="left:1008px;top:119.71px;font-size:18px;line-height:20.11px;color:#cccccc;font-family:'Liberation Sans',sans-serif;font-weight:400;">*</div>
<div class="a t" style="left:1031px;top:123.42px;font-size:15px;line-height:16.75px;color:#cccccc;font-family:'Liberation Sans',sans-serif;font-weight:400;transform:scaleX(0.9405);transform-origin:0 0;">No results</div>
<svg class="a" style="left:1120px;top:121px;" width="18" height="18" viewBox="0 0 18 18" fill="none"><path d="M9 17 V2 M2.5 8.5 L9 2 L15.5 8.5" stroke="#8a8a8a" stroke-width="1.5"/></svg>
<svg class="a" style="left:1150px;top:121px;" width="18" height="18" viewBox="0 0 18 18" fill="none"><path d="M9 1 V16 M2.5 9.5 L9 16 L15.5 9.5" stroke="#8a8a8a" stroke-width="1.5"/></svg>
<svg class="a" style="left:1178px;top:123px;" width="20" height="14" viewBox="0 0 20 14" fill="none"><path d="M1 2 H19 M1 7 H14 M1 12 H19" stroke="#cccccc" stroke-width="1.5"/></svg>
<svg class="a" style="left:1209px;top:124px;" width="15" height="15" viewBox="0 0 15 15" fill="none"><path d="M1.5 1.5 L13.5 13.5 M13.5 1.5 L1.5 13.5" stroke="#cccccc" stroke-width="1.6"/></svg>
<div class="a" style="left:1034px;top:86px;width:279px;height:33px;background:#1f1f1f;border:1px solid #303030;border-radius:5px;box-shadow:0 2px 8px rgba(0,0,0,.6)"></div>
<div class="a" style="left:1048.4px;top:95.4px;width:3.2px;height:3.2px;background:#8a8a8a;border-radius:1px"></div>
<div class="a" style="left:1048.4px;top:101.4px;width:3.2px;height:3.2px;background:#8a8a8a;border-radius:1px"></div>
<div class="a" style="left:1048.4px;top:107.4px;width:3.2px;height:3.2px;background:#8a8a8a;border-radius:1px"></div>
<div class="a" style="left:1054.4px;top:95.4px;width:3.2px;height:3.2px;background:#8a8a8a;border-radius:1px"></div>
<div class="a" style="left:1054.4px;top:101.4px;width:3.2px;height:3.2px;background:#8a8a8a;border-radius:1px"></div>
<div class="a" style="left:1054.4px;top:107.4px;width:3.2px;height:3.2px;background:#8a8a8a;border-radius:1px"></div>
<div class="a" style="left:1071px;top:96px;width:2.4px;height:14px;background:#75beff"></div>
<div class="a" style="left:1078.5px;top:96px;width:2.4px;height:14px;background:#75beff"></div>
<svg class="a" style="left:1097px;top:93px;" width="20" height="20" viewBox="0 0 20 20" fill="none"><path d="M3 11 Q3 3 10 3 Q15 3 17 7" stroke="#8a8a8a" stroke-width="1.7"/><path d="M17.5 2 V8 H11.5" stroke="#8a8a8a" stroke-width="1.6"/><circle cx="10" cy="16" r="2.2" fill="#8a8a8a"/></svg>
<svg class="a" style="left:1129px;top:93px;" width="18" height="20" viewBox="0 0 18 20" fill="none"><path d="M9 1 V11 M4.5 6.5 L9 11 L13.5 6.5" stroke="#8a8a8a" stroke-width="1.7"/><circle cx="9" cy="16" r="2.2" fill="#8a8a8a"/></svg>
<svg class="a" style="left:1160px;top:93px;" width="18" height="20" viewBox="0 0 18 20" fill="none"><path d="M9 12 V2 M4.5 6.5 L9 2 L13.5 6.5" stroke="#8a8a8a" stroke-width="1.7"/><circle cx="9" cy="16" r="2.2" fill="#8a8a8a"/></svg>
<svg class="a" style="left:1193px;top:93px;" width="14" height="20" viewBox="0 0 14 20" fill="none"><path d="M9 1 L2 11.5 H7 L5 19 L12.5 8 H7.5 Z" fill="#f5a623"/></svg>
<svg class="a" style="left:1222px;top:94px;" width="19" height="18" viewBox="0 0 19 18" fill="none"><path d="M5 3.5 A7 7 0 1 1 3 9.5" stroke="#89d185" stroke-width="2"/><path d="M2 1.5 V7 H7.5" stroke="#89d185" stroke-width="2"/></svg>
<div class="a" style="left:1255px;top:95px;width:16px;height:16px;border:2.2px solid #f48771;border-radius:1px"></div>
<svg class="a" style="left:1284px;top:93px;" width="19" height="19" viewBox="0 0 19 19" fill="none"><path d="M1.5 5.5 V1.5 H5.5 M13.5 1.5 H17.5 V5.5 M1.5 13.5 V17.5 H5.5 M13.5 17.5 H17.5 V13.5" stroke="#4fc1e9" stroke-width="1.8"/><circle cx="9" cy="8.5" r="3.2" stroke="#4fc1e9" stroke-width="1.8"/><path d="M11.3 10.8 L14 13.5" stroke="#4fc1e9" stroke-width="1.8"/></svg>
<div class="a t" style="left:376px;top:682.08px;font-size:13.5px;line-height:15.08px;color:#9d9d9d;font-family:'Liberation Sans',sans-serif;font-weight:400;transform:scaleX(0.8438);transform-origin:0 0;">PROBLEMS</div>
<div class="a t" style="left:490.5px;top:682.08px;font-size:13.5px;line-height:15.08px;color:#9d9d9d;font-family:'Liberation Sans',sans-serif;font-weight:400;transform:scaleX(0.8884);transform-origin:0 0;">OUTPUT</div>
<div class="a t" style="left:568.5px;top:682.08px;font-size:13.5px;line-height:15.08px;color:#9d9d9d;font-family:'Liberation Sans',sans-serif;font-weight:400;transform:scaleX(0.8703);transform-origin:0 0;">DEBUG CONSOLE</div>
<div class="a t" style="left:700px;top:682.08px;font-size:13.5px;line-height:15.08px;color:#e7e7e7;font-family:'Liberation Sans',sans-serif;font-weight:400;transform:scaleX(0.9010);transform-origin:0 0;">TERMINAL</div>
<div class="a t" style="left:790px;top:682.08px;font-size:13.5px;line-height:15.08px;color:#9d9d9d;font-family:'Liberation Sans',sans-serif;font-weight:400;transform:scaleX(0.8214);transform-origin:0 0;">PORTS</div>
<div class="a" style="left:697px;top:701px;width:67px;height:1.6px;background:#0078d4"></div>
<div class="a" style="left:445px;top:680px;width:19px;height:19px;background:#0078d4;border-radius:50%"></div>
<div class="a t" style="left:450.5px;top:683.19px;font-size:12.5px;line-height:13.96px;color:#ffffff;font-family:'Liberation Sans',sans-serif;font-weight:400;">9</div>
<svg class="a" style="left:1289px;top:680px;" width="19" height="19" viewBox="0 0 19 19" fill="none"><path d="M9.5 1 V18 M1 9.5 H18" stroke="#cccccc" stroke-width="1.6"/></svg>
<svg class="a" style="left:1312px;top:685px;" width="11" height="8" viewBox="0 0 11 8" fill="none"><path d="M1 1.5 L5.5 6 L10 1.5" stroke="#cccccc" stroke-width="1.3"/></svg>
<div class="a" style="left:1336.1px;top:688px;width:2.8px;height:2.8px;background:#cccccc;border-radius:50%"></div>
<div class="a" style="left:1342.1px;top:688px;width:2.8px;height:2.8px;background:#cccccc;border-radius:50%"></div>
<div class="a" style="left:1348.1px;top:688px;width:2.8px;height:2.8px;background:#cccccc;border-radius:50%"></div>
<svg class="a" style="left:1366px;top:683px;" width="15" height="10" viewBox="0 0 15 10" fill="none"><path d="M1.5 8 L7.5 2 L13.5 8" stroke="#cccccc" stroke-width="1.6"/></svg>
<svg class="a" style="left:1399px;top:683px;" width="13" height="13" viewBox="0 0 13 13" fill="none"><path d="M1 1 L12 12 M12 1 L1 12" stroke="#cccccc" stroke-width="1.6"/></svg>
<div class="a t" style="left:376.0px;top:719.40px;font-size:15.0px;line-height:17.00px;font-family:'Liberation Mono',monospace;letter-spacing:0px"><b style="color:#ffffff;font-weight:700">  leak_tracker</b><span style="color:#cccccc"> 10.0.9 </span><span style="color:#29b8db">(11.0.1 available)</span></div>
<div class="a t" style="left:376.0px;top:740.25px;font-size:15.0px;line-height:17.00px;font-family:'Liberation Mono',monospace;letter-spacing:0px"><b style="color:#ffffff;font-weight:700">  leak_tracker_flutter_testing</b><span style="color:#cccccc"> 3.0.9 </span><span style="color:#29b8db">(3.0.10 available)</span></div>
<div class="a t" style="left:376.0px;top:761.11px;font-size:15.0px;line-height:17.00px;font-family:'Liberation Mono',monospace;letter-spacing:0px"><b style="color:#ffffff;font-weight:700">  leak_tracker_testing</b><span style="color:#cccccc"> 3.0.1 </span><span style="color:#29b8db">(3.0.2 available)</span></div>
<div class="a t" style="left:376.0px;top:781.95px;font-size:15.0px;line-height:17.00px;font-family:'Liberation Mono',monospace;letter-spacing:0px"><b style="color:#ffffff;font-weight:700">  lints</b><span style="color:#cccccc"> 3.0.0 </span><span style="color:#29b8db">(6.0.0 available)</span></div>
<div class="a t" style="left:376.0px;top:802.80px;font-size:15.0px;line-height:17.00px;font-family:'Liberation Mono',monospace;letter-spacing:0px"><b style="color:#ffffff;font-weight:700">  material_color_utilities</b><span style="color:#cccccc"> 0.11.1 </span><span style="color:#29b8db">(0.13.0 available)</span></div>
<div class="a t" style="left:376.0px;top:823.65px;font-size:15.0px;line-height:17.00px;font-family:'Liberation Mono',monospace;letter-spacing:0px"><b style="color:#ffffff;font-weight:700">  meta</b><span style="color:#cccccc"> 1.16.0 </span><span style="color:#29b8db">(1.17.0 available)</span></div>
<div class="a t" style="left:376.0px;top:844.50px;font-size:15.0px;line-height:17.00px;font-family:'Liberation Mono',monospace;letter-spacing:0px"><b style="color:#ffffff;font-weight:700">  test_api</b><span style="color:#cccccc"> 0.7.4 </span><span style="color:#29b8db">(0.7.6 available)</span></div>
<div class="a t" style="left:376.0px;top:865.36px;font-size:15.0px;line-height:17.00px;font-family:'Liberation Mono',monospace;letter-spacing:0px"><b style="color:#ffffff;font-weight:700">  vector_math</b><span style="color:#cccccc"> 2.1.4 </span><span style="color:#29b8db">(2.2.0 available)</span></div>
<div class="a t" style="left:376.0px;top:886.21px;font-size:15.0px;line-height:17.00px;font-family:'Liberation Mono',monospace;letter-spacing:0px"><b style="color:#ffffff;font-weight:700">  vm_service</b><span style="color:#cccccc"> 15.0.0 </span><span style="color:#29b8db">(15.0.2 available)</span></div>
<div class="a t" style="left:376.0px;top:907.05px;font-size:15.0px;line-height:17.00px;font-family:'Liberation Mono',monospace;letter-spacing:0px"><span style="color:#cccccc">Got dependencies!</span></div>
<div class="a t" style="left:376.0px;top:927.90px;font-size:15.0px;line-height:17.00px;font-family:'Liberation Mono',monospace;letter-spacing:0px"><span style="color:#cccccc">12 packages have newer versions incompatible with dependency constraints.</span></div>
<div class="a t" style="left:376.0px;top:948.75px;font-size:15.0px;line-height:17.00px;font-family:'Liberation Mono',monospace;letter-spacing:0px"><span style="color:#cccccc">Try `flutter pub outdated` for more information.</span></div>
<div class="a t" style="left:376.0px;top:969.61px;font-size:15.0px;line-height:17.00px;font-family:'Liberation Mono',monospace;letter-spacing:0px"><span style="color:#cccccc">PS C:\lao_pos_system&gt; </span></div>
<div class="a" style="left:574px;top:966px;width:10px;height:20.5px;border:1.3px solid #cccccc"></div>
<svg class="a" style="left:358px;top:970px;" width="13" height="13" viewBox="0 0 13 13" fill="none"><circle cx="6.5" cy="6.5" r="4.6" stroke="#8a8a8a" stroke-width="2"/></svg>
<div class="a" style="left:1272px;top:714px;width:5px;height:4px;background:#2f8fd0"></div>
<div class="a" style="left:1272px;top:974px;width:6px;height:6px;background:#5a5a5a"></div>
<div class="a" style="left:1289px;top:711px;width:1px;height:298px;background:#2b2b2b"></div>
<div class="a" style="left:1289px;top:736px;width:143px;height:27px;background:#37373d"></div>
<div class="a" style="left:1289.5px;top:736px;width:1.5px;height:27px;background:#2a6cb0"></div>
<svg class="a" style="left:1302px;top:714.7px;" width="19" height="18" viewBox="0 0 19 18" fill="none"><rect x="1" y="1" width="17" height="16" rx="1.5" stroke="#cccccc" stroke-width="1.4"/><path d="M4.5 5 L8 8.5 L4.5 12 M9 12.5 H14" stroke="#cccccc" stroke-width="1.4"/></svg>
<div class="a t" style="left:1325.5px;top:715.12px;font-size:15px;line-height:16.75px;color:#cccccc;font-family:'Liberation Sans',sans-serif;font-weight:400;transform:scaleX(1.0251);transform-origin:0 0;">powershell</div>
<svg class="a" style="left:1302px;top:740.6px;" width="19" height="18" viewBox="0 0 19 18" fill="none"><rect x="1" y="1" width="17" height="16" rx="1.5" stroke="#cccccc" stroke-width="1.4"/><path d="M4.5 5 L8 8.5 L4.5 12 M9 12.5 H14" stroke="#cccccc" stroke-width="1.4"/></svg>
<div class="a t" style="left:1325.5px;top:741.02px;font-size:15px;line-height:16.75px;color:#cccccc;font-family:'Liberation Sans',sans-serif;font-weight:400;transform:scaleX(1.0251);transform-origin:0 0;">powershell</div>
<svg class="a" style="left:12px;top:1012px;" width="17" height="15" viewBox="0 0 17 15" fill="none"><path d="M2 1.5 L6.5 6 L2 10.5 M15 4.5 L10.5 9 L15 13.5" stroke="#ffffff" stroke-width="1.5"/></svg>
<svg class="a" style="left:50px;top:1012px;" width="17" height="17" viewBox="0 0 17 17" fill="none"><circle cx="8.5" cy="8.5" r="7" stroke="#fff" stroke-width="1.4"/><path d="M5.5 5.5 L11.5 11.5 M11.5 5.5 L5.5 11.5" stroke="#fff" stroke-width="1.4"/></svg>
<div class="a t" style="left:71px;top:1014.08px;font-size:14.5px;line-height:16.20px;color:#ffffff;font-family:'Liberation Sans',sans-serif;font-weight:400;">0</div>
<svg class="a" style="left:83px;top:1011px;" width="17" height="16" viewBox="0 0 17 16" fill="none"><path d="M8.5 1.5 L16 15 H1 Z" stroke="#fff" stroke-width="1.4" stroke-linejoin="round"/><path d="M8.5 6 V10.5" stroke="#fff" stroke-width="1.5"/><circle cx="8.5" cy="12.7" r="0.9" fill="#fff"/></svg>
<div class="a t" style="left:104px;top:1014.08px;font-size:14.5px;line-height:16.20px;color:#ffffff;font-family:'Liberation Sans',sans-serif;font-weight:400;">0</div>
<svg class="a" style="left:115px;top:1012px;" width="17" height="17" viewBox="0 0 17 17" fill="none"><circle cx="8.5" cy="8.5" r="7" stroke="#fff" stroke-width="1.4"/><path d="M8.5 7 V12.5" stroke="#fff" stroke-width="1.6"/><circle cx="8.5" cy="4.7" r="1" fill="#fff"/></svg>
<div class="a t" style="left:136px;top:1014.08px;font-size:14.5px;line-height:16.20px;color:#ffffff;font-family:'Liberation Sans',sans-serif;font-weight:400;">9</div>
<svg class="a" style="left:161px;top:1011px;" width="20" height="19" viewBox="0 0 20 19" fill="none"><path d="M8 2 L18 9 L10 14" stroke="#fff" stroke-width="1.5" stroke-linejoin="round"/><path d="M8 2 V8" stroke="#fff" stroke-width="1.5"/><ellipse cx="7" cy="14" rx="3.5" ry="4" stroke="#fff" stroke-width="1.4"/><path d="M2 11 L4 12 M12 11 L10 12 M1.5 15 H3.5 M10.5 15 H12.5" stroke="#fff" stroke-width="1.2"/></svg>
<div class="a t" style="left:200px;top:1014.08px;font-size:14.5px;line-height:16.20px;color:#ffffff;font-family:'Liberation Sans',sans-serif;font-weight:400;transform:scaleX(0.9847);transform-origin:0 0;">Debug my code</div>
<div class="a" style="left:535px;top:1009px;width:39px;height:22px;background:#1f86d8"></div>
<svg class="a" style="left:546px;top:1011px;" width="19" height="19" viewBox="0 0 19 19" fill="none"><circle cx="7.5" cy="7.5" r="6" stroke="#fff" stroke-width="1.5"/><path d="M7.5 4.5 V10.5 M4.5 7.5 H10.5" stroke="#fff" stroke-width="1.4"/><path d="M12 12 L17.5 17.5" stroke="#fff" stroke-width="1.7"/></svg>
<div class="a t" style="left:585px;top:1014.08px;font-size:14.5px;line-height:16.20px;color:#ffffff;font-family:'Liberation Sans',sans-serif;font-weight:400;transform:scaleX(0.9449);transform-origin:0 0;">Ln 202, Col 2</div>
<div class="a t" style="left:686.5px;top:1014.08px;font-size:14.5px;line-height:16.20px;color:#ffffff;font-family:'Liberation Sans',sans-serif;font-weight:400;transform:scaleX(0.8995);transform-origin:0 0;">Spaces: 2</div>
<div class="a t" style="left:764px;top:1014.08px;font-size:14.5px;line-height:16.20px;color:#ffffff;font-family:'Liberation Sans',sans-serif;font-weight:400;transform:scaleX(0.9251);transform-origin:0 0;">UTF-8</div>
<div class="a t" style="left:821.5px;top:1014.08px;font-size:14.5px;line-height:16.20px;color:#ffffff;font-family:'Liberation Sans',sans-serif;font-weight:400;transform:scaleX(0.8187);transform-origin:0 0;">CRLF</div>
<div class="a t" style="left:873px;top:1013.08px;font-size:14.5px;line-height:16.20px;color:#ffffff;font-family:'Liberation Sans',sans-serif;font-weight:400;transform:scaleX(1.0207);transform-origin:0 0;">{ }</div>
<div class="a t" style="left:896px;top:1014.08px;font-size:14.5px;line-height:16.20px;color:#ffffff;font-family:'Liberation Sans',sans-serif;font-weight:400;transform:scaleX(0.9857);transform-origin:0 0;">Dart</div>
<svg class="a" style="left:941.5px;top:1011.5px;" width="18" height="16" viewBox="0 0 18 16" fill="none"><circle cx="5.8" cy="4.5" r="3.2" stroke="#fff" stroke-width="1.8"/><circle cx="12.2" cy="4.5" r="3.2" stroke="#fff" stroke-width="1.8"/><path d="M2.8 8 Q0.9 9.3 0.9 11.2 Q0.9 15.2 9 15.2 Q17.1 15.2 17.1 11.2 Q17.1 9.3 15.2 8" stroke="#fff" stroke-width="1.9"/><path d="M3 8.3 H15 V14 H3 Z" fill="#fff" fill-opacity="0.0"/><rect x="6.4" y="9.8" width="1.8" height="3" fill="#fff"/><rect x="9.8" y="9.8" width="1.8" height="3" fill="#fff"/></svg>
<svg class="a" style="left:978px;top:1011px;" width="18" height="18" viewBox="0 0 18 18" fill="none"><circle cx="9" cy="9" r="7.3" stroke="#fff" stroke-width="1.5"/><path d="M4 14 L14 4" stroke="#fff" stroke-width="1.5"/></svg>
<div class="a t" style="left:998.5px;top:1014.08px;font-size:14.5px;line-height:16.20px;color:#ffffff;font-family:'Liberation Sans',sans-serif;font-weight:400;transform:scaleX(0.9587);transform-origin:0 0;">Port : 5500</div>
<div class="a t" style="left:1086px;top:1014.08px;font-size:14.5px;line-height:16.20px;color:#ffffff;font-family:'Liberation Sans',sans-serif;font-weight:400;transform:scaleX(0.9916);transform-origin:0 0;">Medium Phone API 36 (android-x64 emulator)</div>
<svg class="a" style="left:1398px;top:1010px;" width="18" height="19" viewBox="0 0 18 19" fill="none"><path d="M9 2 Q4 2 4 8 V12 L2 15 H16 L14 12 V8 Q14 2 9 2 Z" stroke="#fff" stroke-width="1.5" stroke-linejoin="round"/><path d="M7 17 Q9 19 11 17" stroke="#fff" stroke-width="1.3"/><circle cx="14.5" cy="3.5" r="3" fill="#fff"/></svg>
<div class="a" style="left:1272px;top:711px;width:1px;height:298px;background:#262626"></div>
<div class="a" style="left:1446px;top:6px;width:388px;height:893px;background:#fdf6f5;border-radius:8px 8px 8px 8px;overflow:hidden;box-shadow:0 2px 6px rgba(0,0,0,.35)"></div>
<div class="a" style="left:1446px;top:6px;width:388px;height:30px;background:#f3f3f3;border-radius:8px 8px 0 0"></div>
<div class="a t" style="left:1455.5px;top:14.69px;font-size:12.5px;line-height:13.96px;color:#6a6a6a;font-family:'Liberation Sans',sans-serif;font-weight:400;transform:scaleX(0.9328);transform-origin:0 0;">Android Emulator - Medium_Phone_API_36:5554</div>
<div class="a" style="left:1446px;top:36px;width:388px;height:75px;background:#f1453a"></div>
<div class="a t" style="left:1461px;top:39.53px;font-size:14px;line-height:15.64px;color:#ffffff;font-family:'Liberation Sans',sans-serif;font-weight:400;transform:scaleX(0.9176);transform-origin:0 0;">8:26</div>
<svg class="a" style="left:1491px;top:40px;" width="13" height="14" viewBox="0 0 13 14" fill="none"><path d="M6.5 1 L12 3 V7 Q12 11.5 6.5 13.5 Q1 11.5 1 7 V3 Z" stroke="#fff" stroke-width="1.6"/><path d="M3.5 4.5 L9.5 10.5" stroke="#fff" stroke-width="1.4"/></svg>
<svg class="a" style="left:1512px;top:40px;" width="12" height="13" viewBox="0 0 12 13" fill="none"><path d="M3.5 1 H11 V13 H1 V3.5 Z" fill="#fff"/><path d="M5 2.5 V4.5 M7 2.5 V4.5 M9 2.5 V4.5" stroke="#f1453a" stroke-width="1"/></svg>
<svg class="a" style="left:1765px;top:40px;" width="16" height="13" viewBox="0 0 16 13" fill="none"><path d="M8 12.5 L0.5 3.5 Q8 -2 15.5 3.5 Z" fill="#fff"/></svg>
<svg class="a" style="left:1781px;top:40px;" width="13" height="13" viewBox="0 0 13 13" fill="none"><path d="M12.5 0.5 V12.5 H0.5 Z" fill="#fff"/></svg>
<svg class="a" style="left:1798px;top:39px;" width="10" height="14" viewBox="0 0 10 14" fill="none"><rect x="0.5" y="2" width="9" height="12" rx="1" fill="#fff"/><rect x="3" y="0" width="4" height="2.5" fill="#fff"/></svg>
<svg class="a" style="left:1605px;top:69.50px;overflow:visible" width="72.5" height="29.9"><path transform="translate(0.00 23.00) scale(23)" d="M0.05 -0.50 Q0.09 -0.54 0.09 -0.46 V0" stroke="#ffffff" stroke-width="0.072" stroke-linecap="round" stroke-linejoin="round" fill="none"/><path transform="translate(5.98 23.00) scale(23)" d="M0.06 -0.40 Q0.08 -0.54 0.26 -0.54 Q0.44 -0.54 0.44 -0.36 V0 M0.06 -0.40 V-0.12 M0.13 -0.12 m-0.07 0 a0.07 0.07 0 1 0 0.14 0 a0.07 0.07 0 1 0 -0.14 0" stroke="#ffffff" stroke-width="0.072" stroke-linecap="round" stroke-linejoin="round" fill="none"/><path transform="translate(17.94 23.00) scale(23)" d="M-0.42 -0.62 Q-0.40 -0.74 -0.24 -0.74 Q-0.08 -0.74 -0.08 -0.62 M-0.26 -0.80 V-0.72" stroke="#ffffff" stroke-width="0.072" stroke-linecap="round" stroke-linejoin="round" fill="none"/><path transform="translate(17.94 23.00) scale(23)" d="M0.14 -0.38 m-0.08 0 a0.08 0.08 0 1 0 0.16 0 a0.08 0.08 0 1 0 -0.16 0 M0.06 -0.38 Q0.08 -0.54 0.26 -0.54 Q0.45 -0.54 0.45 -0.27 Q0.45 0 0.25 0 Q0.08 0 0.06 -0.14" stroke="#ffffff" stroke-width="0.072" stroke-linecap="round" stroke-linejoin="round" fill="none"/><path transform="translate(29.90 23.00) scale(23)" d="M0.06 -0.46 Q0.14 -0.54 0.28 -0.54 Q0.43 -0.54 0.43 -0.36 V0 M0.17 -0.52 Q0.10 -0.32 0.10 0" stroke="#ffffff" stroke-width="0.072" stroke-linecap="round" stroke-linejoin="round" fill="none"/><path transform="translate(41.40 23.00) scale(23)" d="M0.28 -0.78 Q0.08 -0.78 0.08 -0.64 V0" stroke="#ffffff" stroke-width="0.072" stroke-linecap="round" stroke-linejoin="round" fill="none"/><path transform="translate(49.22 23.00) scale(23)" d="M0.06 -0.08 V-0.34 Q0.06 -0.54 0.18 -0.54 Q0.27 -0.54 0.27 -0.42 Q0.27 -0.54 0.37 -0.54 Q0.47 -0.54 0.47 -0.34 V0 M0.06 -0.08 Q0.06 0 0.14 0 Q0.21 0 0.21 -0.08" stroke="#ffffff" stroke-width="0.072" stroke-linecap="round" stroke-linejoin="round" fill="none"/><path transform="translate(61.64 23.00) scale(23)" d="M0.07 -0.50 V-0.38 H0.22 M0.07 -0.20 V-0.06 H0.22" stroke="#ffffff" stroke-width="0.072" stroke-linecap="round" stroke-linejoin="round" fill="none"/></svg>
<div class="a" style="left:1461px;top:126.3px;width:106px;height:106.5px;background:#388e3c;border-radius:10px;box-shadow:0 2.5px 4px rgba(0,0,0,.28)"></div>
<svg class="a" style="left:1497px;top:146.3px;" width="34" height="34" viewBox="0 0 34 34" fill="none"><circle cx="17" cy="17" r="14.5" stroke="#fff" stroke-width="3.2"/><path d="M9.5 17.5 L14.5 22.5 L24.5 12" stroke="#fff" stroke-width="3.4" stroke-linejoin="miter"/></svg>
<svg class="a" style="left:1495.57984375px;top:188.80px;overflow:visible" width="25.8" height="24.1"><path transform="translate(0.00 18.50) scale(18.5)" d="M0.28 -0.78 Q0.08 -0.78 0.08 -0.64 V0" stroke="#ffffff" stroke-width="0.12" stroke-linecap="round" stroke-linejoin="round" fill="none"/><path transform="translate(6.29 18.50) scale(18.5)" d="M0.06 -0.08 V-0.34 Q0.06 -0.54 0.18 -0.54 Q0.27 -0.54 0.27 -0.42 Q0.27 -0.54 0.37 -0.54 Q0.47 -0.54 0.47 -0.34 V0 M0.06 -0.08 Q0.06 0 0.14 0 Q0.21 0 0.21 -0.08" stroke="#ffffff" stroke-width="0.12" stroke-linecap="round" stroke-linejoin="round" fill="none"/><path transform="translate(16.28 18.50) scale(18.5)" d="M0.07 -0.50 V-0.38 H0.22 M0.07 -0.20 V-0.06 H0.22" stroke="#ffffff" stroke-width="0.12" stroke-linecap="round" stroke-linejoin="round" fill="none"/></svg>
<div class="a t" style="left:1517.40984375px;top:191.01px;font-size:18px;line-height:20.11px;color:#ffffff;font-family:'Liberation Sans',sans-serif;font-weight:700;"> 1</div>
<div class="a" style="left:1586.5px;top:126.3px;width:106px;height:106.5px;background:#388e3c;border-radius:10px;box-shadow:0 2.5px 4px rgba(0,0,0,.28)"></div>
<svg class="a" style="left:1622.5px;top:146.3px;" width="34" height="34" viewBox="0 0 34 34" fill="none"><circle cx="17" cy="17" r="14.5" stroke="#fff" stroke-width="3.2"/><path d="M9.5 17.5 L14.5 22.5 L24.5 12" stroke="#fff" stroke-width="3.4" stroke-linejoin="miter"/></svg>
<svg class="a" style="left:1621.07984375px;top:188.80px;overflow:visible" width="25.8" height="24.1"><path transform="translate(0.00 18.50) scale(18.5)" d="M0.28 -0.78 Q0.08 -0.78 0.08 -0.64 V0" stroke="#ffffff" stroke-width="0.12" stroke-linecap="round" stroke-linejoin="round" fill="none"/><path transform="translate(6.29 18.50) scale(18.5)" d="M0.06 -0.08 V-0.34 Q0.06 -0.54 0.18 -0.54 Q0.27 -0.54 0.27 -0.42 Q0.27 -0.54 0.37 -0.54 Q0.47 -0.54 0.47 -0.34 V0 M0.06 -0.08 Q0.06 0 0.14 0 Q0.21 0 0.21 -0.08" stroke="#ffffff" stroke-width="0.12" stroke-linecap="round" stroke-linejoin="round" fill="none"/><path transform="translate(16.28 18.50) scale(18.5)" d="M0.07 -0.50 V-0.38 H0.22 M0.07 -0.20 V-0.06 H0.22" stroke="#ffffff" stroke-width="0.12" stroke-linecap="round" stroke-linejoin="round" fill="none"/></svg>
<div class="a t" style="left:1642.90984375px;top:191.01px;font-size:18px;line-height:20.11px;color:#ffffff;font-family:'Liberation Sans',sans-serif;font-weight:700;"> 2</div>
<div class="a" style="left:1712px;top:126.3px;width:106px;height:106.5px;background:#388e3c;border-radius:10px;box-shadow:0 2.5px 4px rgba(0,0,0,.28)"></div>
<svg class="a" style="left:1748px;top:146.3px;" width="34" height="34" viewBox="0 0 34 34" fill="none"><circle cx="17" cy="17" r="14.5" stroke="#fff" stroke-width="3.2"/><path d="M9.5 17.5 L14.5 22.5 L24.5 12" stroke="#fff" stroke-width="3.4" stroke-linejoin="miter"/></svg>
<svg class="a" style="left:1746.57984375px;top:188.80px;overflow:visible" width="25.8" height="24.1"><path transform="translate(0.00 18.50) scale(18.5)" d="M0.28 -0.78 Q0.08 -0.78 0.08 -0.64 V0" stroke="#ffffff" stroke-width="0.12" stroke-linecap="round" stroke-linejoin="round" fill="none"/><path transform="translate(6.29 18.50) scale(18.5)" d="M0.06 -0.08 V-0.34 Q0.06 -0.54 0.18 -0.54 Q0.27 -0.54 0.27 -0.42 Q0.27 -0.54 0.37 -0.54 Q0.47 -0.54 0.47 -0.34 V0 M0.06 -0.08 Q0.06 0 0.14 0 Q0.21 0 0.21 -0.08" stroke="#ffffff" stroke-width="0.12" stroke-linecap="round" stroke-linejoin="round" fill="none"/><path transform="translate(16.28 18.50) scale(18.5)" d="M0.07 -0.50 V-0.38 H0.22 M0.07 -0.20 V-0.06 H0.22" stroke="#ffffff" stroke-width="0.12" stroke-linecap="round" stroke-linejoin="round" fill="none"/></svg>
<div class="a t" style="left:1768.40984375px;top:191.01px;font-size:18px;line-height:20.11px;color:#ffffff;font-family:'Liberation Sans',sans-serif;font-weight:700;"> 3</div>
<div class="a" style="left:1461px;top:251.9px;width:106px;height:106.5px;background:#388e3c;border-radius:10px;box-shadow:0 2.5px 4px rgba(0,0,0,.28)"></div>
<svg class="a" style="left:1497px;top:271.9px;" width="34" height="34" viewBox="0 0 34 34" fill="none"><circle cx="17" cy="17" r="14.5" stroke="#fff" stroke-width="3.2"/><path d="M9.5 17.5 L14.5 22.5 L24.5 12" stroke="#fff" stroke-width="3.4" stroke-linejoin="miter"/></svg>
<svg class="a" style="left:1495.57984375px;top:314.40px;overflow:visible" width="25.8" height="24.1"><path transform="translate(0.00 18.50) scale(18.5)" d="M0.28 -0.78 Q0.08 -0.78 0.08 -0.64 V0" stroke="#ffffff" stroke-width="0.12" stroke-linecap="round" stroke-linejoin="round" fill="none"/><path transform="translate(6.29 18.50) scale(18.5)" d="M0.06 -0.08 V-0.34 Q0.06 -0.54 0.18 -0.54 Q0.27 -0.54 0.27 -0.42 Q0.27 -0.54 0.37 -0.54 Q0.47 -0.54 0.47 -0.34 V0 M0.06 -0.08 Q0.06 0 0.14 0 Q0.21 0 0.21 -0.08" stroke="#ffffff" stroke-width="0.12" stroke-linecap="round" stroke-linejoin="round" fill="none"/><path transform="translate(16.28 18.50) scale(18.5)" d="M0.07 -0.50 V-0.38 H0.22 M0.07 -0.20 V-0.06 H0.22" stroke="#ffffff" stroke-width="0.12" stroke-linecap="round" stroke-linejoin="round" fill="none"/></svg>
<div class="a t" style="left:1517.40984375px;top:316.61px;font-size:18px;line-height:20.11px;color:#ffffff;font-family:'Liberation Sans',sans-serif;font-weight:700;"> 4</div>
<div class="a" style="left:1586.5px;top:251.9px;width:106px;height:106.5px;background:#388e3c;border-radius:10px;box-shadow:0 2.5px 4px rgba(0,0,0,.28)"></div>
<svg class="a" style="left:1622.5px;top:271.9px;" width="34" height="34" viewBox="0 0 34 34" fill="none"><circle cx="17" cy="17" r="14.5" stroke="#fff" stroke-width="3.2"/><path d="M9.5 17.5 L14.5 22.5 L24.5 12" stroke="#fff" stroke-width="3.4" stroke-linejoin="miter"/></svg>
<svg class="a" style="left:1621.07984375px;top:314.40px;overflow:visible" width="25.8" height="24.1"><path transform="translate(0.00 18.50) scale(18.5)" d="M0.28 -0.78 Q0.08 -0.78 0.08 -0.64 V0" stroke="#ffffff" stroke-width="0.12" stroke-linecap="round" stroke-linejoin="round" fill="none"/><path transform="translate(6.29 18.50) scale(18.5)" d="M0.06 -0.08 V-0.34 Q0.06 -0.54 0.18 -0.54 Q0.27 -0.54 0.27 -0.42 Q0.27 -0.54 0.37 -0.54 Q0.47 -0.54 0.47 -0.34 V0 M0.06 -0.08 Q0.06 0 0.14 0 Q0.21 0 0.21 -0.08" stroke="#ffffff" stroke-width="0.12" stroke-linecap="round" stroke-linejoin="round" fill="none"/><path transform="translate(16.28 18.50) scale(18.5)" d="M0.07 -0.50 V-0.38 H0.22 M0.07 -0.20 V-0.06 H0.22" stroke="#ffffff" stroke-width="0.12" stroke-linecap="round" stroke-linejoin="round" fill="none"/></svg>
<div class="a t" style="left:1642.90984375px;top:316.61px;font-size:18px;line-height:20.11px;color:#ffffff;font-family:'Liberation Sans',sans-serif;font-weight:700;"> 5</div>
<div class="a" style="left:1712px;top:251.9px;width:106px;height:106.5px;background:#388e3c;border-radius:10px;box-shadow:0 2.5px 4px rgba(0,0,0,.28)"></div>
<svg class="a" style="left:1748px;top:271.9px;" width="34" height="34" viewBox="0 0 34 34" fill="none"><circle cx="17" cy="17" r="14.5" stroke="#fff" stroke-width="3.2"/><path d="M9.5 17.5 L14.5 22.5 L24.5 12" stroke="#fff" stroke-width="3.4" stroke-linejoin="miter"/></svg>
<svg class="a" style="left:1746.57984375px;top:314.40px;overflow:visible" width="25.8" height="24.1"><path transform="translate(0.00 18.50) scale(18.5)" d="M0.28 -0.78 Q0.08 -0.78 0.08 -0.64 V0" stroke="#ffffff" stroke-width="0.12" stroke-linecap="round" stroke-linejoin="round" fill="none"/><path transform="translate(6.29 18.50) scale(18.5)" d="M0.06 -0.08 V-0.34 Q0.06 -0.54 0.18 -0.54 Q0.27 -0.54 0.27 -0.42 Q0.27 -0.54 0.37 -0.54 Q0.47 -0.54 0.47 -0.34 V0 M0.06 -0.08 Q0.06 0 0.14 0 Q0.21 0 0.21 -0.08" stroke="#ffffff" stroke-width="0.12" stroke-linecap="round" stroke-linejoin="round" fill="none"/><path transform="translate(16.28 18.50) scale(18.5)" d="M0.07 -0.50 V-0.38 H0.22 M0.07 -0.20 V-0.06 H0.22" stroke="#ffffff" stroke-width="0.12" stroke-linecap="round" stroke-linejoin="round" fill="none"/></svg>
<div class="a t" style="left:1768.40984375px;top:316.61px;font-size:18px;line-height:20.11px;color:#ffffff;font-family:'Liberation Sans',sans-serif;font-weight:700;"> 6</div>
<div class="a" style="left:1461px;top:377.5px;width:106px;height:106.5px;background:#d32f2f;border-radius:10px;box-shadow:0 2.5px 4px rgba(0,0,0,.28)"></div>
<svg class="a" style="left:1495.4px;top:394.8px;" width="39.3" height="39.3" viewBox="0 0 24 24" fill="none"><path fill="#fff" d="M16.67 13.13C18.04 14.06 19 15.32 19 17v3h4v-3c0-2.180-3.57-3.47-6.33-3.87z M9 12c2.21 0 4-1.79 4-4s-1.79-4-4-4-4 1.79-4 4 1.79 4 4 4z M15 12c2.21 0 4-1.79 4-4s-1.79-4-4-4c-.47 0-.91.1-1.33.24C14.5 5.27 15 6.58 15 8s-.5 2.73-1.33 3.76c.42.14.86.24 1.33.24z M9 13c-2.67 0-8 1.34-8 4v3h16v-3c0-2.66-5.33-4-8-4z"/></svg>
<svg class="a" style="left:1495.57984375px;top:440.00px;overflow:visible" width="25.8" height="24.1"><path transform="translate(0.00 18.50) scale(18.5)" d="M0.28 -0.78 Q0.08 -0.78 0.08 -0.64 V0" stroke="#ffffff" stroke-width="0.12" stroke-linecap="round" stroke-linejoin="round" fill="none"/><path transform="translate(6.29 18.50) scale(18.5)" d="M0.06 -0.08 V-0.34 Q0.06 -0.54 0.18 -0.54 Q0.27 -0.54 0.27 -0.42 Q0.27 -0.54 0.37 -0.54 Q0.47 -0.54 0.47 -0.34 V0 M0.06 -0.08 Q0.06 0 0.14 0 Q0.21 0 0.21 -0.08" stroke="#ffffff" stroke-width="0.12" stroke-linecap="round" stroke-linejoin="round" fill="none"/><path transform="translate(16.28 18.50) scale(18.5)" d="M0.07 -0.50 V-0.38 H0.22 M0.07 -0.20 V-0.06 H0.22" stroke="#ffffff" stroke-width="0.12" stroke-linecap="round" stroke-linejoin="round" fill="none"/></svg>
<div class="a t" style="left:1517.40984375px;top:442.21px;font-size:18px;line-height:20.11px;color:#ffffff;font-family:'Liberation Sans',sans-serif;font-weight:700;"> 7</div>
<div class="a" style="left:1586.5px;top:377.5px;width:106px;height:106.5px;background:#388e3c;border-radius:10px;box-shadow:0 2.5px 4px rgba(0,0,0,.28)"></div>
<svg class="a" style="left:1622.5px;top:397.5px;" width="34" height="34" viewBox="0 0 34 34" fill="none"><circle cx="17" cy="17" r="14.5" stroke="#fff" stroke-width="3.2"/><path d="M9.5 17.5 L14.5 22.5 L24.5 12" stroke="#fff" stroke-width="3.4" stroke-linejoin="miter"/></svg>
<svg class="a" style="left:1621.07984375px;top:440.00px;overflow:visible" width="25.8" height="24.1"><path transform="translate(0.00 18.50) scale(18.5)" d="M0.28 -0.78 Q0.08 -0.78 0.08 -0.64 V0" stroke="#ffffff" stroke-width="0.12" stroke-linecap="round" stroke-linejoin="round" fill="none"/><path transform="translate(6.29 18.50) scale(18.5)" d="M0.06 -0.08 V-0.34 Q0.06 -0.54 0.18 -0.54 Q0.27 -0.54 0.27 -0.42 Q0.27 -0.54 0.37 -0.54 Q0.47 -0.54 0.47 -0.34 V0 M0.06 -0.08 Q0.06 0 0.14 0 Q0.21 0 0.21 -0.08" stroke="#ffffff" stroke-width="0.12" stroke-linecap="round" stroke-linejoin="round" fill="none"/><path transform="translate(16.28 18.50) scale(18.5)" d="M0.07 -0.50 V-0.38 H0.22 M0.07 -0.20 V-0.06 H0.22" stroke="#ffffff" stroke-width="0.12" stroke-linecap="round" stroke-linejoin="round" fill="none"/></svg>
<div class="a t" style="left:1642.90984375px;top:442.21px;font-size:18px;line-height:20.11px;color:#ffffff;font-family:'Liberation Sans',sans-serif;font-weight:700;"> 8</div>
<div class="a" style="left:1712px;top:377.5px;width:106px;height:106.5px;background:#388e3c;border-radius:10px;box-shadow:0 2.5px 4px rgba(0,0,0,.28)"></div>
<svg class="a" style="left:1748px;top:397.5px;" width="34" height="34" viewBox="0 0 34 34" fill="none"><circle cx="17" cy="17" r="14.5" stroke="#fff" stroke-width="3.2"/><path d="M9.5 17.5 L14.5 22.5 L24.5 12" stroke="#fff" stroke-width="3.4" stroke-linejoin="miter"/></svg>
<svg class="a" style="left:1746.57984375px;top:440.00px;overflow:visible" width="25.8" height="24.1"><path transform="translate(0.00 18.50) scale(18.5)" d="M0.28 -0.78 Q0.08 -0.78 0.08 -0.64 V0" stroke="#ffffff" stroke-width="0.12" stroke-linecap="round" stroke-linejoin="round" fill="none"/><path transform="translate(6.29 18.50) scale(18.5)" d="M0.06 -0.08 V-0.34 Q0.06 -0.54 0.18 -0.54 Q0.27 -0.54 0.27 -0.42 Q0.27 -0.54 0.37 -0.54 Q0.47 -0.54 0.47 -0.34 V0 M0.06 -0.08 Q0.06 0 0.14 0 Q0.21 0 0.21 -0.08" stroke="#ffffff" stroke-width="0.12" stroke-linecap="round" stroke-linejoin="round" fill="none"/><path transform="translate(16.28 18.50) scale(18.5)" d="M0.07 -0.50 V-0.38 H0.22 M0.07 -0.20 V-0.06 H0.22" stroke="#ffffff" stroke-width="0.12" stroke-linecap="round" stroke-linejoin="round" fill="none"/></svg>
<div class="a t" style="left:1768.40984375px;top:442.21px;font-size:18px;line-height:20.11px;color:#ffffff;font-family:'Liberation Sans',sans-serif;font-weight:700;"> 9</div>
<div class="a" style="left:1461px;top:503.1px;width:106px;height:106.5px;background:#388e3c;border-radius:10px;box-shadow:0 2.5px 4px rgba(0,0,0,.28)"></div>
<svg class="a" style="left:1497px;top:523.1px;" width="34" height="34" viewBox="0 0 34 34" fill="none"><circle cx="17" cy="17" r="14.5" stroke="#fff" stroke-width="3.2"/><path d="M9.5 17.5 L14.5 22.5 L24.5 12" stroke="#fff" stroke-width="3.4" stroke-linejoin="miter"/></svg>
<svg class="a" style="left:1490.575px;top:565.60px;overflow:visible" width="25.8" height="24.1"><path transform="translate(0.00 18.50) scale(18.5)" d="M0.28 -0.78 Q0.08 -0.78 0.08 -0.64 V0" stroke="#ffffff" stroke-width="0.12" stroke-linecap="round" stroke-linejoin="round" fill="none"/><path transform="translate(6.29 18.50) scale(18.5)" d="M0.06 -0.08 V-0.34 Q0.06 -0.54 0.18 -0.54 Q0.27 -0.54 0.27 -0.42 Q0.27 -0.54 0.37 -0.54 Q0.47 -0.54 0.47 -0.34 V0 M0.06 -0.08 Q0.06 0 0.14 0 Q0.21 0 0.21 -0.08" stroke="#ffffff" stroke-width="0.12" stroke-linecap="round" stroke-linejoin="round" fill="none"/><path transform="translate(16.28 18.50) scale(18.5)" d="M0.07 -0.50 V-0.38 H0.22 M0.07 -0.20 V-0.06 H0.22" stroke="#ffffff" stroke-width="0.12" stroke-linecap="round" stroke-linejoin="round" fill="none"/></svg>
<div class="a t" style="left:1512.405px;top:567.81px;font-size:18px;line-height:20.11px;color:#ffffff;font-family:'Liberation Sans',sans-serif;font-weight:700;"> 10</div>
<div class="a" style="left:1586.5px;top:503.1px;width:106px;height:106.5px;background:#388e3c;border-radius:10px;box-shadow:0 2.5px 4px rgba(0,0,0,.28)"></div>
<svg class="a" style="left:1622.5px;top:523.1px;" width="34" height="34" viewBox="0 0 34 34" fill="none"><circle cx="17" cy="17" r="14.5" stroke="#fff" stroke-width="3.2"/><path d="M9.5 17.5 L14.5 22.5 L24.5 12" stroke="#fff" stroke-width="3.4" stroke-linejoin="miter"/></svg>
<svg class="a" style="left:1616.57140625px;top:565.60px;overflow:visible" width="25.8" height="24.1"><path transform="translate(0.00 18.50) scale(18.5)" d="M0.28 -0.78 Q0.08 -0.78 0.08 -0.64 V0" stroke="#ffffff" stroke-width="0.12" stroke-linecap="round" stroke-linejoin="round" fill="none"/><path transform="translate(6.29 18.50) scale(18.5)" d="M0.06 -0.08 V-0.34 Q0.06 -0.54 0.18 -0.54 Q0.27 -0.54 0.27 -0.42 Q0.27 -0.54 0.37 -0.54 Q0.47 -0.54 0.47 -0.34 V0 M0.06 -0.08 Q0.06 0 0.14 0 Q0.21 0 0.21 -0.08" stroke="#ffffff" stroke-width="0.12" stroke-linecap="round" stroke-linejoin="round" fill="none"/><path transform="translate(16.28 18.50) scale(18.5)" d="M0.07 -0.50 V-0.38 H0.22 M0.07 -0.20 V-0.06 H0.22" stroke="#ffffff" stroke-width="0.12" stroke-linecap="round" stroke-linejoin="round" fill="none"/></svg>
<div class="a t" style="left:1638.40140625px;top:567.81px;font-size:18px;line-height:20.11px;color:#ffffff;font-family:'Liberation Sans',sans-serif;font-weight:700;"> 11</div>
<div class="a" style="left:1712px;top:503.1px;width:106px;height:106.5px;background:#388e3c;border-radius:10px;box-shadow:0 2.5px 4px rgba(0,0,0,.28)"></div>
<svg class="a" style="left:1748px;top:523.1px;" width="34" height="34" viewBox="0 0 34 34" fill="none"><circle cx="17" cy="17" r="14.5" stroke="#fff" stroke-width="3.2"/><path d="M9.5 17.5 L14.5 22.5 L24.5 12" stroke="#fff" stroke-width="3.4" stroke-linejoin="miter"/></svg>
<svg class="a" style="left:1741.575px;top:565.60px;overflow:visible" width="25.8" height="24.1"><path transform="translate(0.00 18.50) scale(18.5)" d="M0.28 -0.78 Q0.08 -0.78 0.08 -0.64 V0" stroke="#ffffff" stroke-width="0.12" stroke-linecap="round" stroke-linejoin="round" fill="none"/><path transform="translate(6.29 18.50) scale(18.5)" d="M0.06 -0.08 V-0.34 Q0.06 -0.54 0.18 -0.54 Q0.27 -0.54 0.27 -0.42 Q0.27 -0.54 0.37 -0.54 Q0.47 -0.54 0.47 -0.34 V0 M0.06 -0.08 Q0.06 0 0.14 0 Q0.21 0 0.21 -0.08" stroke="#ffffff" stroke-width="0.12" stroke-linecap="round" stroke-linejoin="round" fill="none"/><path transform="translate(16.28 18.50) scale(18.5)" d="M0.07 -0.50 V-0.38 H0.22 M0.07 -0.20 V-0.06 H0.22" stroke="#ffffff" stroke-width="0.12" stroke-linecap="round" stroke-linejoin="round" fill="none"/></svg>
<div class="a t" style="left:1763.405px;top:567.81px;font-size:18px;line-height:20.11px;color:#ffffff;font-family:'Liberation Sans',sans-serif;font-weight:700;"> 12</div>
<div class="a" style="left:1446px;top:820px;width:388px;height:79px;background:#f44336;border-radius:0 0 8px 8px"></div>
<svg class="a" style="left:1499px;top:829px;" width="22" height="18" viewBox="0 0 22 18" fill="none"><path d="M2 2 H20 V7 H2 Z" fill="#fff"/><path d="M4 7 L3 17 M18 7 L19 17 M4 11 H18" stroke="#fff" stroke-width="2.6"/></svg>
<svg class="a" style="left:1629px;top:829px;" width="20" height="20" viewBox="0 0 20 20" fill="none"><polygon points="18.70,10.00 18.63,11.14 16.38,11.71 16.10,12.53 15.72,13.30 16.90,15.30 16.15,16.15 15.30,16.90 13.30,15.72 12.53,16.10 11.71,16.38 11.14,18.63 10.00,18.70 8.86,18.63 8.29,16.38 7.47,16.10 6.70,15.72 4.70,16.90 3.85,16.15 3.10,15.30 4.28,13.30 3.90,12.53 3.62,11.71 1.37,11.14 1.30,10.00 1.37,8.86 3.62,8.29 3.90,7.47 4.28,6.70 3.10,4.70 3.85,3.85 4.70,3.10 6.70,4.28 7.47,3.90 8.29,3.62 8.86,1.37 10.00,1.30 11.14,1.37 11.71,3.62 12.53,3.90 13.30,4.28 15.30,3.10 16.15,3.85 16.90,4.70 15.72,6.70 16.10,7.47 16.38,8.29 18.63,8.86" stroke="#ffd9d4" stroke-width="1.6" stroke-linejoin="round"/><circle cx="10" cy="10" r="3" stroke="#ffd9d4" stroke-width="1.6"/></svg>
<svg class="a" style="left:1759px;top:829px;" width="20" height="19" viewBox="0 0 20 19" fill="none"><path d="M8 1.5 H2 V17.5 H8" stroke="#ffd9d4" stroke-width="1.8"/><path d="M7 9.5 H17.5 M13.5 5.5 L17.5 9.5 L13.5 13.5" stroke="#ffd9d4" stroke-width="1.8"/></svg>
<svg class="a" style="left:1488px;top:849.50px;overflow:visible" width="48.7" height="19.5"><path transform="translate(0.00 15.00) scale(15)" d="M0.05 -0.50 Q0.09 -0.54 0.09 -0.46 V0" stroke="#ffffff" stroke-width="0.08" stroke-linecap="round" stroke-linejoin="round" fill="none"/><path transform="translate(3.90 15.00) scale(15)" d="M0.06 -0.40 Q0.08 -0.54 0.26 -0.54 Q0.44 -0.54 0.44 -0.36 V0 M0.06 -0.40 V-0.12 M0.13 -0.12 m-0.07 0 a0.07 0.07 0 1 0 0.14 0 a0.07 0.07 0 1 0 -0.14 0" stroke="#ffffff" stroke-width="0.08" stroke-linecap="round" stroke-linejoin="round" fill="none"/><path transform="translate(11.70 15.00) scale(15)" d="M-0.42 -0.62 Q-0.40 -0.74 -0.24 -0.74 Q-0.08 -0.74 -0.08 -0.62 M-0.26 -0.80 V-0.72" stroke="#ffffff" stroke-width="0.08" stroke-linecap="round" stroke-linejoin="round" fill="none"/><path transform="translate(11.70 15.00) scale(15)" d="M0.14 -0.38 m-0.08 0 a0.08 0.08 0 1 0 0.16 0 a0.08 0.08 0 1 0 -0.16 0 M0.06 -0.38 Q0.08 -0.54 0.26 -0.54 Q0.45 -0.54 0.45 -0.27 Q0.45 0 0.25 0 Q0.08 0 0.06 -0.14" stroke="#ffffff" stroke-width="0.08" stroke-linecap="round" stroke-linejoin="round" fill="none"/><path transform="translate(19.50 15.00) scale(15)" d="M0.06 -0.46 Q0.14 -0.54 0.28 -0.54 Q0.43 -0.54 0.43 -0.36 V0 M0.17 -0.52 Q0.10 -0.32 0.10 0" stroke="#ffffff" stroke-width="0.08" stroke-linecap="round" stroke-linejoin="round" fill="none"/><path transform="translate(27.00 15.00) scale(15)" d="M0.28 -0.78 Q0.08 -0.78 0.08 -0.64 V0" stroke="#ffffff" stroke-width="0.08" stroke-linecap="round" stroke-linejoin="round" fill="none"/><path transform="translate(32.10 15.00) scale(15)" d="M0.06 -0.08 V-0.34 Q0.06 -0.54 0.18 -0.54 Q0.27 -0.54 0.27 -0.42 Q0.27 -0.54 0.37 -0.54 Q0.47 -0.54 0.47 -0.34 V0 M0.06 -0.08 Q0.06 0 0.14 0 Q0.21 0 0.21 -0.08" stroke="#ffffff" stroke-width="0.08" stroke-linecap="round" stroke-linejoin="round" fill="none"/><path transform="translate(40.20 15.00) scale(15)" d="M0.07 -0.50 V-0.38 H0.22 M0.07 -0.20 V-0.06 H0.22" stroke="#ffffff" stroke-width="0.08" stroke-linecap="round" stroke-linejoin="round" fill="none"/></svg>
<svg class="a" style="left:1628px;top:851.00px;overflow:visible" width="30.2" height="17.6"><path transform="translate(0.00 13.50) scale(13.5)" d="M0.06 -0.08 V-0.34 Q0.06 -0.54 0.18 -0.54 Q0.27 -0.54 0.27 -0.42 Q0.27 -0.54 0.37 -0.54 Q0.47 -0.54 0.47 -0.34 V0 M0.06 -0.08 Q0.06 0 0.14 0 Q0.21 0 0.21 -0.08" stroke="#ffd6d0" stroke-width="0.08" stroke-linecap="round" stroke-linejoin="round" fill="none"/><path transform="translate(7.29 13.50) scale(13.5)" d="M-0.38 -0.68 Q-0.22 -0.58 -0.06 -0.68 M-0.06 -0.68 V-0.74" stroke="#ffd6d0" stroke-width="0.08" stroke-linecap="round" stroke-linejoin="round" fill="none"/><path transform="translate(7.29 13.50) scale(13.5)" d="M-0.22 -0.92 Q-0.14 -0.80 -0.06 -0.90 Q-0.02 -0.82 0.04 -0.84" stroke="#ffd6d0" stroke-width="0.08" stroke-linecap="round" stroke-linejoin="round" fill="none"/><path transform="translate(7.29 13.50) scale(13.5)" d="M0.10 -0.47 m-0.06 0 a0.06 0.06 0 1 0 0.12 0 a0.06 0.06 0 1 0 -0.12 0 M0.16 -0.46 Q0.38 -0.30 0.38 -0.54 V-0.06 Q0.38 0.04 0.26 0.02" stroke="#ffd6d0" stroke-width="0.08" stroke-linecap="round" stroke-linejoin="round" fill="none"/><path transform="translate(13.23 13.50) scale(13.5)" d="M0.14 -0.36 m-0.07 0 a0.07 0.07 0 1 0 0.14 0 a0.07 0.07 0 1 0 -0.14 0 M0.07 -0.36 Q0.09 -0.54 0.27 -0.54 Q0.45 -0.54 0.45 -0.34 V0" stroke="#ffd6d0" stroke-width="0.08" stroke-linecap="round" stroke-linejoin="round" fill="none"/><path transform="translate(20.25 13.50) scale(13.5)" d="M-0.12 -0.94 V-0.76" stroke="#ffd6d0" stroke-width="0.08" stroke-linecap="round" stroke-linejoin="round" fill="none"/><path transform="translate(20.25 13.50) scale(13.5)" d="M0.05 -0.46 Q0.12 -0.54 0.22 -0.54 Q0.38 -0.54 0.38 -0.34 V0" stroke="#ffd6d0" stroke-width="0.08" stroke-linecap="round" stroke-linejoin="round" fill="none"/></svg>
<svg class="a" style="left:1736px;top:851.20px;overflow:visible" width="68.4" height="17.3"><path transform="translate(0.00 13.30) scale(13.3)" d="M0.14 -0.38 m-0.08 0 a0.08 0.08 0 1 0 0.16 0 a0.08 0.08 0 1 0 -0.16 0 M0.06 -0.38 Q0.08 -0.54 0.26 -0.54 Q0.45 -0.54 0.45 -0.27 Q0.45 0 0.25 0 Q0.08 0 0.06 -0.14" stroke="#ffd6d0" stroke-width="0.08" stroke-linecap="round" stroke-linejoin="round" fill="none"/><path transform="translate(6.92 13.30) scale(13.3)" d="M0.14 -0.38 m-0.08 0 a0.08 0.08 0 1 0 0.16 0 a0.08 0.08 0 1 0 -0.16 0 M0.06 -0.38 Q0.08 -0.54 0.26 -0.54 Q0.45 -0.54 0.45 -0.27 Q0.45 0 0.25 0 Q0.08 0 0.06 -0.14" stroke="#ffd6d0" stroke-width="0.08" stroke-linecap="round" stroke-linejoin="round" fill="none"/><path transform="translate(13.83 13.30) scale(13.3)" d="M0.06 -0.46 Q0.14 -0.54 0.28 -0.54 Q0.43 -0.54 0.43 -0.36 V0 M0.17 -0.52 Q0.10 -0.32 0.10 0" stroke="#ffd6d0" stroke-width="0.08" stroke-linecap="round" stroke-linejoin="round" fill="none"/><path transform="translate(20.48 13.30) scale(13.3)" d="M0.05 -0.44 Q0.12 -0.54 0.26 -0.54 Q0.44 -0.54 0.44 -0.27 Q0.44 0 0.24 0 M0.24 -0.18 m-0.06 0 a0.06 0.06 0 1 0 0.12 0 a0.06 0.06 0 1 0 -0.12 0" stroke="#ffd6d0" stroke-width="0.08" stroke-linecap="round" stroke-linejoin="round" fill="none"/><path transform="translate(27.13 13.30) scale(13.3)" d="M0.05 -0.46 Q0.12 -0.54 0.22 -0.54 Q0.38 -0.54 0.38 -0.34 V0" stroke="#ffd6d0" stroke-width="0.08" stroke-linecap="round" stroke-linejoin="round" fill="none"/><path transform="translate(32.98 13.30) scale(13.3)" d="M0.06 -0.46 Q0.14 -0.54 0.28 -0.54 Q0.43 -0.54 0.43 -0.36 V0 M0.17 -0.52 Q0.10 -0.32 0.10 0" stroke="#ffd6d0" stroke-width="0.08" stroke-linecap="round" stroke-linejoin="round" fill="none"/><path transform="translate(39.63 13.30) scale(13.3)" d="M0.06 -0.40 Q0.08 -0.54 0.26 -0.54 Q0.44 -0.54 0.44 -0.36 V0 M0.06 -0.40 V-0.12 M0.13 -0.12 m-0.07 0 a0.07 0.07 0 1 0 0.14 0 a0.07 0.07 0 1 0 -0.14 0" stroke="#ffd6d0" stroke-width="0.08" stroke-linecap="round" stroke-linejoin="round" fill="none"/><path transform="translate(46.55 13.30) scale(13.3)" d="M0.07 -0.50 V-0.38 H0.22 M0.07 -0.20 V-0.06 H0.22" stroke="#ffd6d0" stroke-width="0.08" stroke-linecap="round" stroke-linejoin="round" fill="none"/><path transform="translate(50.54 13.30) scale(13.3)" d="M0.13 -0.46 m-0.07 0 a0.07 0.07 0 1 0 0.14 0 a0.07 0.07 0 1 0 -0.14 0 M0.20 -0.46 V-0.10 Q0.20 0 0.30 0 Q0.44 0 0.44 -0.12 V-0.54" stroke="#ffd6d0" stroke-width="0.08" stroke-linecap="round" stroke-linejoin="round" fill="none"/><path transform="translate(57.46 13.30) scale(13.3)" d="M-0.40 -0.62 Q-0.24 -0.78 -0.08 -0.62" stroke="#ffd6d0" stroke-width="0.08" stroke-linecap="round" stroke-linejoin="round" fill="none"/><path transform="translate(57.46 13.30) scale(13.3)" d="M0.13 -0.46 m-0.07 0 a0.07 0.07 0 1 0 0.14 0 a0.07 0.07 0 1 0 -0.14 0 M0.20 -0.46 V-0.10 Q0.20 0 0.30 0 Q0.44 0 0.44 -0.12 V-0.54" stroke="#ffd6d0" stroke-width="0.08" stroke-linecap="round" stroke-linejoin="round" fill="none"/></svg>
<div class="a" style="left:1588px;top:884px;width:103px;height:5px;background:#ffffff;border-radius:3px"></div>
<div class="a" style="left:1834px;top:36px;width:65px;height:515px;background:#f0f0f0;border:1px solid #1b1b1b"></div>
<div class="a" style="left:1848px;top:50.5px;width:9px;height:1.2px;background:#6b7780"></div>
<svg class="a" style="left:1876px;top:45px;" width="9" height="9" viewBox="0 0 9 9" fill="none"><path d="M1 1 L8 8 M8 1 L1 8" stroke="#6b7780" stroke-width="1.3"/></svg>
<svg class="a" style="left:1856px;top:74px;" width="20" height="20" viewBox="0 0 20 20" fill="none"><path d="M6 4.5 A7.5 7.5 0 1 0 14 4.5" stroke="#6b7780" stroke-width="1.6"/><path d="M10 1 V9.5" stroke="#6b7780" stroke-width="1.6"/></svg>
<svg class="a" style="left:1855px;top:118px;" width="22" height="20" viewBox="0 0 22 20" fill="none"><path d="M1.5 7 H5 L10 2.5 V17.5 L5 13 H1.5 Z" stroke="#6b7780" stroke-width="1.5" stroke-linejoin="round"/><path d="M13 6.5 Q15 10 13 13.5 M16 4 Q19.5 10 16 16" stroke="#6b7780" stroke-width="1.5"/></svg>
<svg class="a" style="left:1855px;top:161px;" width="22" height="20" viewBox="0 0 22 20" fill="none"><path d="M3.5 7 H7 L12 2.5 V17.5 L7 13 H3.5 Z" stroke="#6b7780" stroke-width="1.5" stroke-linejoin="round"/><path d="M15 6.5 Q17 10 15 13.5" stroke="#6b7780" stroke-width="1.5"/></svg>
<svg class="a" style="left:1855px;top:206px;" width="22" height="20" viewBox="0 0 22 20" fill="none"><path d="M2 6 H6 L8 3 H14 L16 6 H20 V18 H2 Z" stroke="#6b7780" stroke-width="1.5" stroke-linejoin="round"/><circle cx="11" cy="11.5" r="3.6" stroke="#6b7780" stroke-width="1.5"/></svg>
<svg class="a" style="left:1855px;top:249px;" width="22" height="22" viewBox="0 0 22 22" fill="none"><circle cx="9" cy="9" r="7" stroke="#6b7780" stroke-width="1.5"/><path d="M9 5.5 V12.5 M5.5 9 H12.5 M14 14 L20 20" stroke="#6b7780" stroke-width="1.5"/></svg>
<svg class="a" style="left:1855px;top:293px;" width="22" height="22" viewBox="0 0 22 22" fill="none"><rect x="1.5" y="3" width="8" height="16" rx="1" stroke="#6b7780" stroke-width="1.5"/><path d="M4 5.5 H7" stroke="#6b7780" stroke-width="1.2"/><path d="M13 3 Q19 4 19 11 Q19 16 14 19 M11.5 1 L13.5 3 L11.5 5" stroke="#6b7780" stroke-width="1.5"/></svg>
<svg class="a" style="left:1855px;top:337px;" width="22" height="22" viewBox="0 0 22 22" fill="none"><rect x="12.5" y="3" width="8" height="16" rx="1" stroke="#6b7780" stroke-width="1.5"/><path d="M15 5.5 H18" stroke="#6b7780" stroke-width="1.2"/><path d="M9 3 Q3 4 3 11 Q3 16 8 19 M10.5 1 L8.5 3 L10.5 5" stroke="#6b7780" stroke-width="1.5"/></svg>
<svg class="a" style="left:1858px;top:383px;" width="16" height="16" viewBox="0 0 16 16" fill="none"><path d="M13 2 V14 L2.5 8 Z" stroke="#6b7780" stroke-width="1.5" stroke-linejoin="round"/></svg>
<svg class="a" style="left:1858px;top:428px;" width="16" height="16" viewBox="0 0 16 16" fill="none"><circle cx="8" cy="8" r="6.5" stroke="#6b7780" stroke-width="1.5"/></svg>
<div class="a" style="left:1860px;top:474px;width:12px;height:12px;border:1.5px solid #6b7780"></div>
<div class="a" style="left:1858.4px;top:521.5px;width:3.2px;height:3.2px;background:#6b7780;border-radius:50%"></div>
<div class="a" style="left:1864.4px;top:521.5px;width:3.2px;height:3.2px;background:#6b7780;border-radius:50%"></div>
<div class="a" style="left:1870.4px;top:521.5px;width:3.2px;height:3.2px;background:#6b7780;border-radius:50%"></div>
</body></html>
